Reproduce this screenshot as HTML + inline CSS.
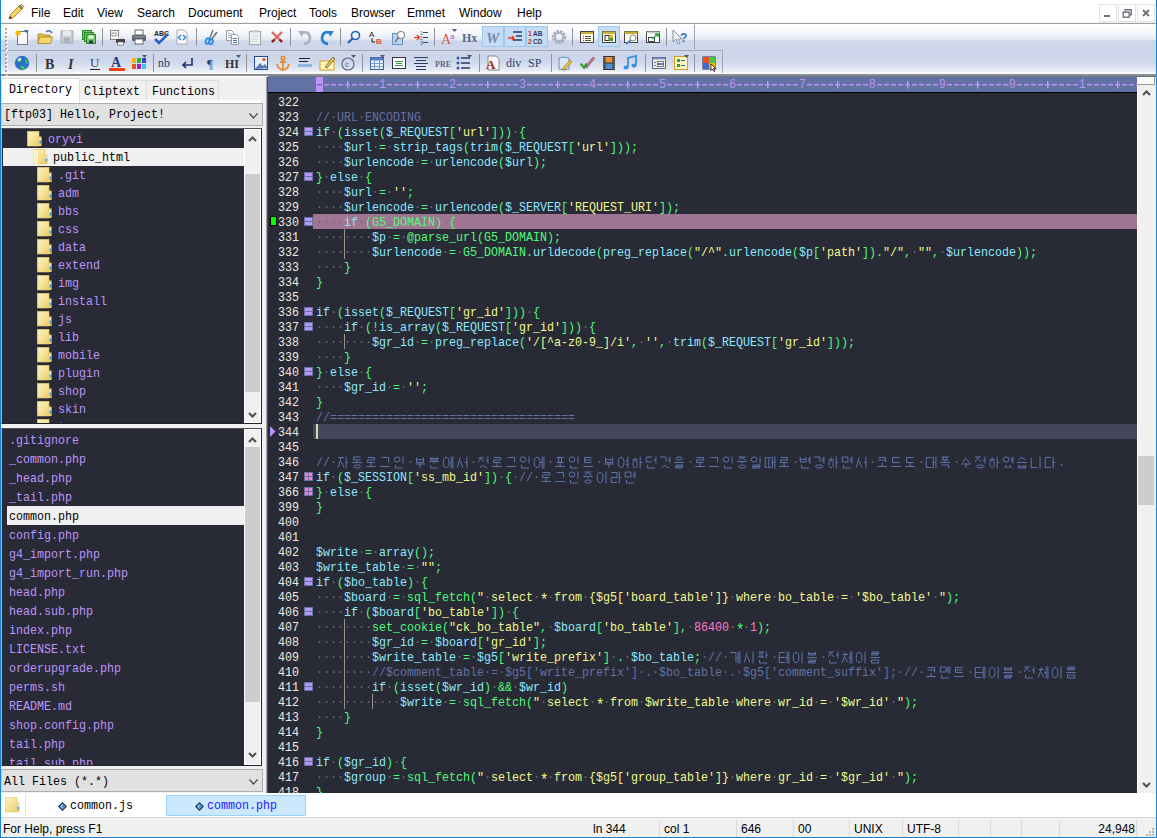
<!DOCTYPE html><html><head><meta charset="utf-8"><title>EditPlus</title><style>
*{margin:0;padding:0;box-sizing:border-box}
html,body{width:1157px;height:838px;overflow:hidden;background:#fff}
body{position:relative;font-family:"Liberation Sans",sans-serif}
.a{position:absolute}
.menu{position:absolute;top:5px;font-size:12px;line-height:16px;color:#000;white-space:pre}
.ic{position:absolute;overflow:visible}
.sep{position:absolute;width:1px;background:#8e949c}
.hlb{position:absolute;background:#c4dcf6;border:1px solid #99c8f0}
.grip{position:absolute;left:5px;width:2px;height:2px;background:#a4aab4;box-shadow:1px 1px 0 #fff}
.mono{font-family:"Liberation Mono",monospace}
.ln{position:absolute;left:268px;width:32px;text-align:right;height:15px;font-family:"Liberation Mono",monospace;font-size:13.333px;line-height:15px;color:#eeeae0;white-space:pre;padding-right:1px}
.ln span{display:inline-block;transform:scaleX(.875);transform-origin:100% 0}
.tx{position:absolute;left:316px;height:15px;font-family:"Liberation Mono",monospace;font-size:13.333px;line-height:15px;white-space:pre;transform:scaleX(.875);transform-origin:0 0}
.tx i{font-style:normal}
.tx svg.hg{display:inline-block;vertical-align:top;width:16px;height:15px}
.w{color:#6e6e6e}
.kw{color:#8be9fd}
.op{color:#50fa7b}
.st{color:#f1fa8c}
.nu{color:#ff79c6}
.cm{color:#6272a4}
.fold{position:absolute;left:304px;width:9px;height:9px;background:#6272a4}
.fold:before{content:"";position:absolute;left:1px;top:1px;width:7px;height:3px;background:#bd93f9}
.fold:after{content:"";position:absolute;left:1px;top:5px;width:7px;height:3px;background:#bd93f9}
.foldc{position:absolute;left:304px;width:9px;height:9px;background:#6272a4}
.foldc i{position:absolute;width:3px;height:3px;background:#ff79c6}
.guide{position:absolute;width:1px;background:#9a9488}
.tree{position:absolute;font-family:"Liberation Mono",monospace;font-size:13.333px;line-height:18px;white-space:pre;color:#bd93f9}
.tree span,.fl span{display:inline-block;transform:scaleX(.875);transform-origin:0 0}
.fl{position:absolute;left:9px;font-family:"Liberation Mono",monospace;font-size:13.333px;line-height:19px;white-space:pre;color:#bd93f9}
.folder{position:absolute;width:14px;height:15px}
.sb{position:absolute;background:#f0f0f0}
.stat{position:absolute;top:821px;font-size:12px;line-height:16px;color:#000;white-space:pre}
.ssep{position:absolute;top:820px;width:1px;height:17px;background:#d9d9d9}
</style></head><body>
<svg width="0" height="0" style="position:absolute"><defs><linearGradient id="fg" x1="0" y1="0" x2="1" y2="1"><stop offset="0" stop-color="#fcf3c4"/><stop offset=".6" stop-color="#f4e090"/><stop offset="1" stop-color="#e8c868"/></linearGradient></defs></svg>
<div class="a" style="left:0;top:0;width:1157px;height:23px;background:#fff"></div>
<svg class="ic" style="left:7px;top:3px" width="18" height="18" viewBox="0 0 18 18"><path d="M2 16l1.5-4.5L13 2l3 3-9.5 9.5z" fill="#f8d060" stroke="#a07020" stroke-width=".8"/><path d="M12 3l3 3" stroke="#3a8a3a" stroke-width="1.4"/><path d="M13.5 1.5l3 3 .8-.8-3-3z" fill="#e06070"/><path d="M2 16l1-3 2 2z" fill="#333"/></svg>
<div class="menu" style="left:31px">File</div>
<div class="menu" style="left:63px">Edit</div>
<div class="menu" style="left:97px">View</div>
<div class="menu" style="left:137px">Search</div>
<div class="menu" style="left:188px">Document</div>
<div class="menu" style="left:259px">Project</div>
<div class="menu" style="left:309px">Tools</div>
<div class="menu" style="left:351px">Browser</div>
<div class="menu" style="left:407px">Emmet</div>
<div class="menu" style="left:459px">Window</div>
<div class="menu" style="left:517px">Help</div>
<div class="a" style="left:1099px;top:4px;width:18px;height:18px;border:1px solid #e3e3e3;background:#fff"></div>
<div class="a" style="left:1118px;top:4px;width:18px;height:18px;border:1px solid #e3e3e3;background:#fff"></div>
<div class="a" style="left:1137px;top:4px;width:18px;height:18px;border:1px solid #e3e3e3;background:#fff"></div>
<div class="a" style="left:1104px;top:15px;width:6px;height:2px;background:#6b707a"></div>
<svg class="ic" style="left:1121px;top:7px" width="12" height="12" viewBox="0 0 12 12"><rect x="2.2" y="5.2" width="6" height="5" fill="none" stroke="#6b707a" stroke-width="1.4"/><path d="M4.2 4.5V2.7h6v5h-1.6" fill="none" stroke="#6b707a" stroke-width="1.4"/></svg>
<svg class="ic" style="left:1142px;top:9px" width="8" height="8" viewBox="0 0 8 8"><path d="M1 1l6 6M7 1L1 7" stroke="#6b707a" stroke-width="1.8"/></svg>
<div class="a" style="left:0;top:22px;width:1157px;height:1px;background:#f0f0f0"></div>
<div class="a" style="left:0;top:23px;width:1157px;height:1px;background:#a0a0a0"></div>
<div class="a" style="left:0;top:24px;width:1157px;height:50px;background:linear-gradient(to bottom,#ffffff 0px,#f5f7fb 9px,#e6ebf4 15px,#dde3ef 16px,#cdd6ea 17px,#cdd6ea 37px,#dfe5f1 44px,#eef1f8 48px,#fbfcfe 49px)"></div>
<div class="a" style="left:1px;top:50px;width:722px;height:1px;background:#a4a8ae"></div>
<div class="a" style="left:722px;top:50px;width:1px;height:24px;background:#a4a8ae"></div>
<div class="a" style="left:694px;top:25px;width:1px;height:24px;background:#a4a8ae"></div>
<div class="a" style="left:0;top:73px;width:1157px;height:1px;background:#fafbfd"></div>
<div class="a" style="left:0;top:74px;width:1157px;height:2px;background:#8a8d92"></div>
<div class="a" style="left:0;top:76px;width:1157px;height:1px;background:#fff"></div>
<div class="a" style="left:268px;top:76px;width:889px;height:1px;background:#70747c"></div>
<div class="grip" style="top:28px"></div>
<div class="grip" style="top:32px"></div>
<div class="grip" style="top:36px"></div>
<div class="grip" style="top:40px"></div>
<div class="grip" style="top:44px"></div>
<div class="grip" style="top:48px"></div>
<div class="grip" style="top:54px"></div>
<div class="grip" style="top:58px"></div>
<div class="grip" style="top:62px"></div>
<div class="grip" style="top:66px"></div>
<div class="grip" style="top:70px"></div>
<div class="grip" style="top:74px"></div>
<div class="hlb" style="left:482px;top:26px;width:22px;height:21px"></div>
<div class="hlb" style="left:504px;top:26px;width:22px;height:21px"></div>
<div class="hlb" style="left:526px;top:26px;width:22px;height:21px"></div>
<div class="hlb" style="left:598px;top:26px;width:22px;height:21px"></div>
<svg class="ic" style="left:14px;top:29px" width="16" height="16" viewBox="0 0 16 16"><rect x="3.5" y="2.5" width="10" height="13" fill="#fafafa" stroke="#777"/><circle cx="4" cy="4" r="2.6" fill="#ffb800"/><path d="M10 1h5l-2.5 3z" fill="#4a6da0"/></svg>
<svg class="ic" style="left:37px;top:29px" width="16" height="16" viewBox="0 0 16 16"><path d="M1 5h5l1 1h6v8H1z" fill="#e8c050" stroke="#a88020" stroke-width=".8"/><path d="M2.5 8h13l-2 6.5H1z" fill="#f6d870" stroke="#a88020" stroke-width=".8"/><path d="M9 3q3-3 6 1" fill="none" stroke="#3a6cb0" stroke-width="1.5"/></svg>
<svg class="ic" style="left:59px;top:29px" width="16" height="16" viewBox="0 0 16 16"><rect x="2" y="2" width="12" height="12" fill="#c8ccd2" stroke="#a8acb2"/><rect x="4" y="2" width="8" height="5" fill="#e8eaee"/><rect x="5" y="9" width="6" height="5" fill="#b0b4ba"/></svg>
<svg class="ic" style="left:81px;top:29px" width="16" height="16" viewBox="0 0 16 16"><g fill="#6cc86c" stroke="#2a8a2a"><rect x="1.5" y="1.5" width="9" height="9"/><rect x="3.5" y="3.5" width="9" height="9"/><rect x="5.5" y="5.5" width="9" height="9"/></g><rect x="7.5" y="6.5" width="5" height="3" fill="#f0fff0"/><rect x="8" y="11.5" width="4" height="3" fill="#334"/></svg>
<div class="sep" style="left:102px;top:28px;height:18px"></div>
<svg class="ic" style="left:109px;top:29px" width="16" height="16" viewBox="0 0 16 16"><rect x="1.5" y="1.5" width="8" height="9" fill="#f8f8f8" stroke="#888"/><rect x="3" y="4" width="4" height="3" fill="none" stroke="#888" stroke-width=".8"/><rect x="7" y="10" width="9" height="4" fill="#444"/><rect x="9" y="8" width="5" height="2" fill="#ddd"/><rect x="8.5" y="13" width="6" height="3" fill="#fff" stroke="#555" stroke-width=".6"/></svg>
<svg class="ic" style="left:131px;top:29px" width="16" height="16" viewBox="0 0 16 16"><rect x="4" y="1" width="8" height="5" fill="#fff" stroke="#666"/><rect x="1" y="6" width="14" height="6" rx="1" fill="#58606a"/><rect x="4" y="10" width="8" height="5" fill="#fff" stroke="#666"/><rect x="2" y="7" width="12" height="1.5" fill="#8890a0"/></svg>
<svg class="ic" style="left:153px;top:29px" width="16" height="16" viewBox="0 0 16 16"><text x="1" y="7" font-family="Liberation Sans" font-size="7" font-weight="bold" fill="#222">ABC</text><path d="M2 10l4 4 9-9" fill="none" stroke="#2a5cc8" stroke-width="2.5"/></svg>
<svg class="ic" style="left:174px;top:29px" width="16" height="16" viewBox="0 0 16 16"><path d="M3 1h7l3 3v11H3z" fill="#fafafa" stroke="#aaa"/><path d="M7 6l-2.5 2.5L7 11M9 6l2.5 2.5L9 11" fill="none" stroke="#3a90e0" stroke-width="1.6"/></svg>
<div class="sep" style="left:196px;top:28px;height:18px"></div>
<svg class="ic" style="left:203px;top:29px" width="16" height="16" viewBox="0 0 16 16"><path d="M6.5 10L10 1M8.5 10.5L14 3" stroke="#606870" stroke-width="1.3"/><ellipse cx="4.5" cy="12" rx="1.8" ry="2.8" fill="none" stroke="#2a88e8" stroke-width="1.8" transform="rotate(20 4.5 12)"/><ellipse cx="8" cy="12.8" rx="1.8" ry="2.6" fill="none" stroke="#2a88e8" stroke-width="1.8" transform="rotate(20 8 12.8)"/></svg>
<svg class="ic" style="left:225px;top:29px" width="16" height="16" viewBox="0 0 16 16"><path d="M1.5 1.5h5l2 2v8h-7z" fill="#fafafa" stroke="#9a9a9a"/><path d="M6.5 5.5h5l2 2v8h-7z" fill="#fff" stroke="#9a9a9a"/><path d="M3 4.5h3M3 6.5h3M3 8.5h3" stroke="#9ab8d8"/><path d="M8 9.5h4M8 11.5h4M8 13.5h4" stroke="#3a78c0"/></svg>
<svg class="ic" style="left:247px;top:29px" width="16" height="16" viewBox="0 0 16 16"><rect x="2.5" y="2.5" width="11" height="13" fill="#f4f4f0" stroke="#a8a8a8" stroke-width="1.2"/><rect x="5.5" y="1" width="5" height="2.5" fill="#c8c8c8"/><path d="M4.5 6.5h7M4.5 8.5h7M4.5 10.5h7M4.5 12.5h7" stroke="#d0dae6"/></svg>
<svg class="ic" style="left:269px;top:29px" width="16" height="16" viewBox="0 0 16 16"><path d="M3 3l10 10M13 3L3 13" stroke="#e06a6a" stroke-width="2.4"/><path d="M5.5 10.5L3 13M10.5 10.5L13 13" stroke="#902020" stroke-width="2.4"/></svg>
<div class="sep" style="left:290px;top:28px;height:18px"></div>
<svg class="ic" style="left:297px;top:29px" width="16" height="16" viewBox="0 0 16 16"><path d="M4 4q8-3 9 5q0 5-6 6" fill="none" stroke="#a8b4c4" stroke-width="2.6"/><path d="M1 2l6 0-2 6z" fill="#a8b4c4"/></svg>
<svg class="ic" style="left:319px;top:29px" width="16" height="16" viewBox="0 0 16 16"><path d="M12 4q-8-3-9 5q0 5 6 6" fill="none" stroke="#2a80d8" stroke-width="2.8"/><path d="M15 2l-6 0 2 6z" fill="#2a80d8"/></svg>
<div class="sep" style="left:340px;top:28px;height:18px"></div>
<svg class="ic" style="left:346px;top:29px" width="16" height="16" viewBox="0 0 16 16"><circle cx="9.5" cy="6.5" r="4" fill="#e8f4ff" stroke="#2a60b8" stroke-width="1.6"/><path d="M7 9l-5 5" stroke="#2a60b8" stroke-width="2.2"/></svg>
<svg class="ic" style="left:369px;top:29px" width="16" height="16" viewBox="0 0 16 16"><text x="0" y="8" font-family="Liberation Sans" font-size="8" fill="#222">A</text><text x="7" y="15" font-family="Liberation Sans" font-size="8" font-weight="bold" fill="#f05020">B</text><path d="M3 9v4h3" fill="none" stroke="#222"/></svg>
<svg class="ic" style="left:391px;top:29px" width="16" height="16" viewBox="0 0 16 16"><rect x="1.5" y="4.5" width="10" height="11" fill="#b8d4f0" stroke="#6a90c0"/><circle cx="10" cy="6" r="3.5" fill="#fff" stroke="#888" stroke-width="1.2"/><path d="M8 8l-4 5" stroke="#777" stroke-width="1.6"/></svg>
<svg class="ic" style="left:413px;top:29px" width="16" height="16" viewBox="0 0 16 16"><path d="M1 8.5h5" stroke="#f04010" stroke-width="1.3"/><path d="M4 6l2.5 2.5L4 11" fill="none" stroke="#f04010" stroke-width="1.3"/><text x="7" y="6" font-family="Liberation Sans" font-size="5" fill="#2a5cb0">1</text><text x="7" y="11" font-family="Liberation Sans" font-size="5" fill="#2a5cb0">2</text><text x="7" y="16" font-family="Liberation Sans" font-size="5" fill="#2a5cb0">3</text><path d="M10 3.5h5M10 8.5h5M10 13.5h5" stroke="#444"/></svg>
<div class="sep" style="left:434px;top:28px;height:18px"></div>
<svg class="ic" style="left:441px;top:29px" width="16" height="16" viewBox="0 0 16 16"><text x="0" y="15" font-family="Liberation Serif" font-size="14" fill="#d06050">A</text><text x="9" y="10" font-family="Liberation Sans" font-size="8" fill="#a060c0">a</text><path d="M11 0h5l-2.5 3z" fill="#4a5a70"/></svg>
<svg class="ic" style="left:462px;top:29px" width="16" height="16" viewBox="0 0 16 16"><text x="0" y="13" font-family="Liberation Serif" font-size="12" font-weight="bold" fill="#5a6a80">Hx</text></svg>
<svg class="ic" style="left:485px;top:29px" width="16" height="16" viewBox="0 0 16 16"><text x="1" y="14" font-family="Liberation Serif" font-size="15" font-style="italic" font-weight="bold" fill="#7a8aa0">W</text></svg>
<svg class="ic" style="left:507px;top:29px" width="16" height="16" viewBox="0 0 16 16"><path d="M6 3h9M9 7h6M6 11h9" stroke="#2a3a60" stroke-width="1.6"/><path d="M1 9h6M5 7l2 2-2 2" stroke="#f04010" stroke-width="1.4" fill="none"/></svg>
<svg class="ic" style="left:528px;top:29px" width="16" height="16" viewBox="0 0 16 16"><text x="0" y="7" font-family="Liberation Sans" font-size="7" font-weight="bold" fill="#e03010">1</text><text x="0" y="15" font-family="Liberation Sans" font-size="7" font-weight="bold" fill="#e03010">2</text><text x="5" y="7" font-family="Liberation Sans" font-size="6.5" font-weight="bold" fill="#2a3a60">AB</text><text x="5" y="15" font-family="Liberation Sans" font-size="6.5" font-weight="bold" fill="#2a3a60">CD</text></svg>
<svg class="ic" style="left:551px;top:29px" width="16" height="16" viewBox="0 0 16 16"><circle cx="8" cy="8" r="5.5" fill="none" stroke="#a0a8b4" stroke-width="3" stroke-dasharray="2.2 1.1"/><circle cx="8" cy="8" r="4" fill="none" stroke="#a8b0bc" stroke-width="1.6"/></svg>
<div class="sep" style="left:572px;top:28px;height:18px"></div>
<svg class="ic" style="left:579px;top:29px" width="16" height="16" viewBox="0 0 16 16"><rect x="1.5" y="2.5" width="13" height="11" fill="#fffbe8" stroke="#444"/><rect x="2" y="3" width="12" height="2" fill="#c8b040"/><path d="M4 7.5h1M4 9.5h1M4 11.5h1" stroke="#d03030"/><path d="M6 7.5h6M6 9.5h6M6 11.5h6" stroke="#555"/></svg>
<svg class="ic" style="left:601px;top:29px" width="16" height="16" viewBox="0 0 16 16"><rect x="1.5" y="2.5" width="13" height="11" fill="#fffbe8" stroke="#444"/><rect x="1.5" y="2.5" width="13" height="2.5" fill="#c8b040"/><rect x="4" y="6.5" width="4" height="5" fill="none" stroke="#333"/><rect x="9" y="6" width="3" height="3" fill="#e0c020"/><rect x="9" y="9" width="3" height="3" fill="#30a030"/></svg>
<svg class="ic" style="left:623px;top:29px" width="16" height="16" viewBox="0 0 16 16"><rect x="1.5" y="2.5" width="13" height="11" fill="#fffbe8" stroke="#444"/><rect x="1.5" y="2.5" width="13" height="2.5" fill="#c8b040"/><circle cx="10" cy="9" r="3" fill="#fff" stroke="#888"/><path d="M8 11l-5 4" stroke="#4a80c8" stroke-width="1.8"/></svg>
<svg class="ic" style="left:645px;top:29px" width="16" height="16" viewBox="0 0 16 16"><rect x="1.5" y="2.5" width="13" height="11" fill="#fff" stroke="#444"/><rect x="1.5" y="2.5" width="13" height="2" fill="#ccc"/><rect x="3.5" y="8.5" width="6" height="4" fill="none" stroke="#444"/><path d="M7 10l6-5M10 5h3v3" stroke="#20b040" stroke-width="1.6" fill="none"/></svg>
<div class="sep" style="left:666px;top:28px;height:18px"></div>
<svg class="ic" style="left:672px;top:29px" width="16" height="16" viewBox="0 0 16 16"><path d="M1 1v12l3-3 2 5 2-1-2-4h4z" fill="#f8f8f8" stroke="#8090a0"/><text x="8" y="13" font-family="Liberation Sans" font-size="12" font-weight="bold" fill="#3a70c8">?</text></svg>
<svg class="ic" style="left:14px;top:55px" width="16" height="16" viewBox="0 0 16 16"><circle cx="8" cy="8" r="7.2" fill="#2a70d0"/><path d="M3 5q2-3 5-2l-1 3-3 1zM6 11q3-1 5 2l-3 2zM11 4l2 1 1 4-2-1z" fill="#40d040"/><circle cx="5.5" cy="4.5" r="1.5" fill="#f0f8ff"/></svg>
<div class="sep" style="left:36px;top:54px;height:18px"></div>
<svg class="ic" style="left:43px;top:55px" width="16" height="16" viewBox="0 0 16 16"><text x="2" y="13.5" font-family="Liberation Serif" font-size="14" font-weight="bold" fill="#333">B</text></svg>
<svg class="ic" style="left:65px;top:55px" width="16" height="16" viewBox="0 0 16 16"><text x="3" y="13.5" font-family="Liberation Serif" font-size="14" font-style="italic" font-weight="bold" fill="#333">I</text></svg>
<svg class="ic" style="left:87px;top:55px" width="16" height="16" viewBox="0 0 16 16"><text x="3" y="12" font-family="Liberation Serif" font-size="13" fill="#444">U</text><path d="M3 14.5h10" stroke="#222"/></svg>
<svg class="ic" style="left:109px;top:55px" width="16" height="16" viewBox="0 0 16 16"><text x="2" y="12" font-family="Liberation Serif" font-size="14" font-weight="bold" fill="#1a3a80">A</text><rect x="0" y="13" width="16" height="3" fill="#f04010"/></svg>
<svg class="ic" style="left:131px;top:55px" width="16" height="16" viewBox="0 0 16 16"><rect x="1" y="3" width="4" height="5" fill="#f8b800"/><rect x="6" y="3" width="4" height="5" fill="#30b030"/><rect x="11" y="3" width="4" height="5" fill="#4040d0"/><rect x="1" y="9" width="4" height="5" fill="#f05020"/><rect x="6" y="9" width="4" height="5" fill="#a020c0"/><rect x="11" y="9" width="4" height="5" fill="#40c0f0"/><path d="M11 0h5l-2.5 3z" fill="#4a5a70"/></svg>
<div class="sep" style="left:153px;top:54px;height:18px"></div>
<svg class="ic" style="left:158px;top:55px" width="16" height="16" viewBox="0 0 16 16"><text x="0" y="12" font-family="Liberation Serif" font-size="12" fill="#2a4070">nb</text></svg>
<svg class="ic" style="left:180px;top:55px" width="16" height="16" viewBox="0 0 16 16"><path d="M12 3v7H4M6 7l-3 3 3 3" fill="none" stroke="#1a3070" stroke-width="1.6"/></svg>
<svg class="ic" style="left:203px;top:55px" width="16" height="16" viewBox="0 0 16 16"><text x="4" y="13" font-family="Liberation Serif" font-size="13" fill="#2a4070">¶</text></svg>
<svg class="ic" style="left:225px;top:55px" width="16" height="16" viewBox="0 0 16 16"><text x="0" y="13" font-family="Liberation Serif" font-size="12" font-weight="bold" fill="#333">HI</text><path d="M11 0h5l-2.5 3z" fill="#4a5a70"/></svg>
<div class="sep" style="left:246px;top:54px;height:18px"></div>
<svg class="ic" style="left:253px;top:55px" width="16" height="16" viewBox="0 0 16 16"><rect x="1.5" y="1.5" width="13" height="13" fill="#e8f0ff" stroke="#2a4a90"/><path d="M2 14l5-6 3 3 2-2 3 4z" fill="#5a7ab0"/><circle cx="11" cy="4.5" r="1.6" fill="#f04010"/></svg>
<svg class="ic" style="left:275px;top:55px" width="16" height="16" viewBox="0 0 16 16"><circle cx="8" cy="3" r="1.8" fill="none" stroke="#e09030" stroke-width="1.6"/><path d="M8 5v10M5 7h6M2 9q1 5 6 6q5-1 6-6" fill="none" stroke="#e09030" stroke-width="1.8"/></svg>
<svg class="ic" style="left:297px;top:55px" width="16" height="16" viewBox="0 0 16 16"><path d="M2 3.5h11M2 6.5h9" stroke="#222" stroke-width="1"/><rect x="1" y="9" width="14" height="3" fill="#8cb8e8"/></svg>
<svg class="ic" style="left:319px;top:55px" width="16" height="16" viewBox="0 0 16 16"><rect x="1" y="6" width="14" height="9" fill="#fff8c0" stroke="#d0a020"/><path d="M6 12l8-10 2 2-8 9z" fill="#f8c040" stroke="#333" stroke-width=".6"/></svg>
<svg class="ic" style="left:340px;top:55px" width="16" height="16" viewBox="0 0 16 16"><circle cx="8" cy="9" r="6" fill="none" stroke="#5a6a80" stroke-width="1.2"/><text x="5" y="12" font-family="Liberation Sans" font-size="8" fill="#5a6a80">c</text><path d="M11 0h5l-2.5 3z" fill="#4a5a70"/></svg>
<div class="sep" style="left:362px;top:54px;height:18px"></div>
<svg class="ic" style="left:369px;top:55px" width="16" height="16" viewBox="0 0 16 16"><rect x="1.5" y="2.5" width="13" height="12" fill="#e8f0ff" stroke="#3a5aa0"/><rect x="1.5" y="2.5" width="13" height="3" fill="#5a80c8"/><path d="M1.5 8.5h13M1.5 11.5h13M5.5 5.5v9M10.5 5.5v9" stroke="#7a9ad0"/><path d="M11 0h5l-2.5 3z" fill="#4a5a70"/></svg>
<svg class="ic" style="left:391px;top:55px" width="16" height="16" viewBox="0 0 16 16"><rect x="1.5" y="2.5" width="13" height="11" fill="#fff" stroke="#334"/><path d="M4 6.5h8M5 8.5h6M4 10.5h8" stroke="#30a030"/></svg>
<svg class="ic" style="left:413px;top:55px" width="16" height="16" viewBox="0 0 16 16"><path d="M1 2.5h14M3 5.5h10M1 8.5h14M3 11.5h10M3 14.5h10" stroke="#2a3a60" stroke-width="1.2"/></svg>
<svg class="ic" style="left:435px;top:55px" width="16" height="16" viewBox="0 0 16 16"><text x="0" y="12" font-family="Liberation Serif" font-size="8" font-weight="bold" fill="#5a6a80">PRE</text></svg>
<svg class="ic" style="left:456px;top:55px" width="16" height="16" viewBox="0 0 16 16"><circle cx="2" cy="3" r="1.5" fill="#2a5cb0"/><circle cx="2" cy="8" r="1.5" fill="#2a5cb0"/><circle cx="2" cy="13" r="1.5" fill="#2a5cb0"/><path d="M5 3h9M5 8h9M5 13h9" stroke="#2a3a60" stroke-width="1.4"/><path d="M11 0h5l-2.5 3z" fill="#4a5a70"/></svg>
<div class="sep" style="left:479px;top:54px;height:18px"></div>
<svg class="ic" style="left:485px;top:55px" width="16" height="16" viewBox="0 0 16 16"><path d="M3 1h8l3 3v11H3z" fill="#fafafa" stroke="#888"/><text x="1" y="14" font-family="Liberation Serif" font-size="13" font-weight="bold" fill="#a02020">A</text></svg>
<svg class="ic" style="left:506px;top:55px" width="16" height="16" viewBox="0 0 16 16"><text x="0" y="12" font-family="Liberation Serif" font-size="12" fill="#2a4070">div</text></svg>
<svg class="ic" style="left:528px;top:55px" width="16" height="16" viewBox="0 0 16 16"><text x="0" y="12" font-family="Liberation Serif" font-size="12" fill="#2a4070">SP</text></svg>
<div class="sep" style="left:551px;top:54px;height:18px"></div>
<svg class="ic" style="left:557px;top:55px" width="16" height="16" viewBox="0 0 16 16"><path d="M2 3q3-2 10 0v11q-5 2-10 0z" fill="#d8e8f8" stroke="#6a8ab0"/><path d="M5 14l8-9 2 2-8 8z" fill="#f0c040" stroke="#8a6a20" stroke-width=".6"/></svg>
<svg class="ic" style="left:579px;top:55px" width="16" height="16" viewBox="0 0 16 16"><path d="M1.5 8.5l3.5 4 3-4" fill="none" stroke="#30a030" stroke-width="2.4"/><path d="M6 12l8-10 1.8 1.2-8 10z" fill="#d07090" stroke="#554" stroke-width=".5"/></svg>
<svg class="ic" style="left:601px;top:55px" width="16" height="16" viewBox="0 0 16 16"><rect x="2" y="1" width="12" height="14" fill="#333"/><rect x="4.5" y="2" width="7" height="5.5" fill="#e89040"/><rect x="4.5" y="8.5" width="7" height="5.5" fill="#4a90d0"/><path d="M3 2v12M13 2v12" stroke="#ddd" stroke-dasharray="1 1.2"/></svg>
<svg class="ic" style="left:622px;top:55px" width="16" height="16" viewBox="0 0 16 16"><path d="M6 12V3l8-2v9" fill="none" stroke="#3a90e0" stroke-width="1.8"/><ellipse cx="4" cy="12.5" rx="2.5" ry="2" fill="#3a90e0"/><ellipse cx="12" cy="10.5" rx="2.5" ry="2" fill="#3a90e0"/></svg>
<div class="sep" style="left:645px;top:54px;height:18px"></div>
<svg class="ic" style="left:651px;top:55px" width="16" height="16" viewBox="0 0 16 16"><rect x="1.5" y="2.5" width="13" height="11" fill="#f8f0c8" stroke="#5a6a9a"/><rect x="2" y="3" width="12" height="1.5" fill="#7a9ad8"/><path d="M3 7.5h2M3 10.5h2" stroke="#5a7ab8"/><rect x="6.5" y="6.5" width="6" height="2" fill="#fff" stroke="#5a7ab8"/><rect x="6.5" y="9.5" width="6" height="2" fill="#fff" stroke="#5a7ab8"/></svg>
<svg class="ic" style="left:673px;top:55px" width="16" height="16" viewBox="0 0 16 16"><rect x="1.5" y="1.5" width="13" height="13" fill="#fff8c0" stroke="#d0a020"/><rect x="4" y="4" width="3" height="3" fill="#30a030"/><rect x="4" y="9" width="3" height="3" fill="#30a030"/><path d="M8 5.5h4M8 10.5h4" stroke="#2a5cb0"/><path d="M11 0h5l-2.5 3z" fill="#4a5a70"/></svg>
<div class="sep" style="left:694px;top:54px;height:18px"></div>
<svg class="ic" style="left:701px;top:55px" width="16" height="16" viewBox="0 0 16 16"><rect x="1.5" y="1.5" width="13" height="13" fill="#222a40"/><rect x="2" y="2" width="6" height="6" fill="#f05020"/><rect x="8" y="2" width="6" height="6" fill="#50c050"/><rect x="2" y="8" width="6" height="6" fill="#3a6cd0"/><rect x="8" y="8" width="6" height="6" fill="#f8b800"/><path d="M10 9v6.5l1.5-1.5 1.5 2.5 1-.6-1.4-2.4h2z" fill="#fff" stroke="#000" stroke-width=".7"/></svg>
<div class="a" style="left:1px;top:77px;width:266px;height:716px;background:#f0f0f0"></div>
<div class="a" style="left:79px;top:80px;width:68px;height:21px;background:#f0f0f0;border:1px solid #dcdcdc;border-bottom:none"></div>
<div class="a" style="left:146px;top:80px;width:73px;height:21px;background:#f0f0f0;border:1px solid #dcdcdc;border-bottom:none"></div>
<div class="a" style="left:79px;top:100px;width:182px;height:3px;background:#fff"></div>
<div class="a" style="left:1px;top:78px;width:79px;height:25px;background:#fff;border:1px solid #dcdcdc;border-bottom:none"></div>
<div class="a mono" style="left:9px;top:82px;font-size:13.333px;line-height:16px;color:#000;white-space:pre;transform:scaleX(.875);transform-origin:0 0">Directory</div>
<div class="a mono" style="left:84px;top:84px;font-size:13.333px;line-height:16px;color:#000;white-space:pre;transform:scaleX(.875);transform-origin:0 0">Cliptext</div>
<div class="a mono" style="left:152px;top:84px;font-size:13.333px;line-height:16px;color:#000;white-space:pre;transform:scaleX(.875);transform-origin:0 0">Functions</div>
<div class="a" style="left:1px;top:103px;width:262px;height:23px;background:#e1e1e1;border:1px solid #adadad;border-left-color:#c8c8c8"></div>
<div class="a mono" style="left:4px;top:107px;font-size:13.333px;line-height:16px;color:#000;white-space:pre;transform:scaleX(.875);transform-origin:0 0">[ftp03] Hello, Project!</div>
<svg class="ic" style="left:249px;top:113px" width="9" height="6" viewBox="0 0 9 6"><path d="M.5 .5L4.5 5L8.5 .5" fill="none" stroke="#444" stroke-width="1.2"/></svg>
<div class="a" style="left:1px;top:128px;width:261px;height:296px;background:#282a36;border:1px solid #22242c;border-left-color:#b0b0b0;border-top-color:#50525a"></div>
<div class="a" style="left:2px;top:129px;width:242px;height:294px;overflow:hidden">
<svg class="ic" style="left:25px;top:2px" width="15" height="16" viewBox="0 0 15 16"><rect x=".3" y=".3" width="11.7" height="14.7" fill="url(#fg)" stroke="#e6c868" stroke-width=".6"/><rect x="12" y="5.5" width="2.6" height="9.5" fill="#efcf6a"/><rect x="12.7" y="7" width="1.2" height="2.5" fill="#e8f4ff"/><rect x="12.7" y="9.5" width="1.2" height="3" fill="#2f8fe0"/></svg>
<div class="tree" style="left:46px;top:2px;color:#bd93f9"><span>oryvi</span></div>
<div class="a" style="left:1px;top:19px;width:241px;height:18px;background:#f0f0f0"></div>
<svg class="ic" style="left:31px;top:20px" width="15" height="16" viewBox="0 0 15 16"><rect x=".3" y=".3" width="11.7" height="14.7" fill="url(#fg)" stroke="#e6c868" stroke-width=".6"/><rect x="12" y="5.5" width="2.6" height="9.5" fill="#efcf6a"/><rect x="12.7" y="7" width="1.2" height="2.5" fill="#e8f4ff"/><rect x="12.7" y="9.5" width="1.2" height="3" fill="#2f8fe0"/><path d="M.5 .5L5 2v13.5L.5 14z" fill="#fdf6d0" opacity=".8"/></svg>
<div class="tree" style="left:51px;top:20px;color:#000"><span>public_html</span></div>
<svg class="ic" style="left:35px;top:38px" width="15" height="16" viewBox="0 0 15 16"><rect x=".3" y=".3" width="11.7" height="14.7" fill="url(#fg)" stroke="#e6c868" stroke-width=".6"/><rect x="12" y="5.5" width="2.6" height="9.5" fill="#efcf6a"/><rect x="12.7" y="7" width="1.2" height="2.5" fill="#e8f4ff"/><rect x="12.7" y="9.5" width="1.2" height="3" fill="#2f8fe0"/></svg>
<div class="tree" style="left:56px;top:38px;color:#bd93f9"><span>.git</span></div>
<svg class="ic" style="left:35px;top:56px" width="15" height="16" viewBox="0 0 15 16"><rect x=".3" y=".3" width="11.7" height="14.7" fill="url(#fg)" stroke="#e6c868" stroke-width=".6"/><rect x="12" y="5.5" width="2.6" height="9.5" fill="#efcf6a"/><rect x="12.7" y="7" width="1.2" height="2.5" fill="#e8f4ff"/><rect x="12.7" y="9.5" width="1.2" height="3" fill="#2f8fe0"/></svg>
<div class="tree" style="left:56px;top:56px;color:#bd93f9"><span>adm</span></div>
<svg class="ic" style="left:35px;top:74px" width="15" height="16" viewBox="0 0 15 16"><rect x=".3" y=".3" width="11.7" height="14.7" fill="url(#fg)" stroke="#e6c868" stroke-width=".6"/><rect x="12" y="5.5" width="2.6" height="9.5" fill="#efcf6a"/><rect x="12.7" y="7" width="1.2" height="2.5" fill="#e8f4ff"/><rect x="12.7" y="9.5" width="1.2" height="3" fill="#2f8fe0"/></svg>
<div class="tree" style="left:56px;top:74px;color:#bd93f9"><span>bbs</span></div>
<svg class="ic" style="left:35px;top:92px" width="15" height="16" viewBox="0 0 15 16"><rect x=".3" y=".3" width="11.7" height="14.7" fill="url(#fg)" stroke="#e6c868" stroke-width=".6"/><rect x="12" y="5.5" width="2.6" height="9.5" fill="#efcf6a"/><rect x="12.7" y="7" width="1.2" height="2.5" fill="#e8f4ff"/><rect x="12.7" y="9.5" width="1.2" height="3" fill="#2f8fe0"/></svg>
<div class="tree" style="left:56px;top:92px;color:#bd93f9"><span>css</span></div>
<svg class="ic" style="left:35px;top:110px" width="15" height="16" viewBox="0 0 15 16"><rect x=".3" y=".3" width="11.7" height="14.7" fill="url(#fg)" stroke="#e6c868" stroke-width=".6"/><rect x="12" y="5.5" width="2.6" height="9.5" fill="#efcf6a"/><rect x="12.7" y="7" width="1.2" height="2.5" fill="#e8f4ff"/><rect x="12.7" y="9.5" width="1.2" height="3" fill="#2f8fe0"/></svg>
<div class="tree" style="left:56px;top:110px;color:#bd93f9"><span>data</span></div>
<svg class="ic" style="left:35px;top:128px" width="15" height="16" viewBox="0 0 15 16"><rect x=".3" y=".3" width="11.7" height="14.7" fill="url(#fg)" stroke="#e6c868" stroke-width=".6"/><rect x="12" y="5.5" width="2.6" height="9.5" fill="#efcf6a"/><rect x="12.7" y="7" width="1.2" height="2.5" fill="#e8f4ff"/><rect x="12.7" y="9.5" width="1.2" height="3" fill="#2f8fe0"/></svg>
<div class="tree" style="left:56px;top:128px;color:#bd93f9"><span>extend</span></div>
<svg class="ic" style="left:35px;top:146px" width="15" height="16" viewBox="0 0 15 16"><rect x=".3" y=".3" width="11.7" height="14.7" fill="url(#fg)" stroke="#e6c868" stroke-width=".6"/><rect x="12" y="5.5" width="2.6" height="9.5" fill="#efcf6a"/><rect x="12.7" y="7" width="1.2" height="2.5" fill="#e8f4ff"/><rect x="12.7" y="9.5" width="1.2" height="3" fill="#2f8fe0"/></svg>
<div class="tree" style="left:56px;top:146px;color:#bd93f9"><span>img</span></div>
<svg class="ic" style="left:35px;top:164px" width="15" height="16" viewBox="0 0 15 16"><rect x=".3" y=".3" width="11.7" height="14.7" fill="url(#fg)" stroke="#e6c868" stroke-width=".6"/><rect x="12" y="5.5" width="2.6" height="9.5" fill="#efcf6a"/><rect x="12.7" y="7" width="1.2" height="2.5" fill="#e8f4ff"/><rect x="12.7" y="9.5" width="1.2" height="3" fill="#2f8fe0"/></svg>
<div class="tree" style="left:56px;top:164px;color:#bd93f9"><span>install</span></div>
<svg class="ic" style="left:35px;top:182px" width="15" height="16" viewBox="0 0 15 16"><rect x=".3" y=".3" width="11.7" height="14.7" fill="url(#fg)" stroke="#e6c868" stroke-width=".6"/><rect x="12" y="5.5" width="2.6" height="9.5" fill="#efcf6a"/><rect x="12.7" y="7" width="1.2" height="2.5" fill="#e8f4ff"/><rect x="12.7" y="9.5" width="1.2" height="3" fill="#2f8fe0"/></svg>
<div class="tree" style="left:56px;top:182px;color:#bd93f9"><span>js</span></div>
<svg class="ic" style="left:35px;top:200px" width="15" height="16" viewBox="0 0 15 16"><rect x=".3" y=".3" width="11.7" height="14.7" fill="url(#fg)" stroke="#e6c868" stroke-width=".6"/><rect x="12" y="5.5" width="2.6" height="9.5" fill="#efcf6a"/><rect x="12.7" y="7" width="1.2" height="2.5" fill="#e8f4ff"/><rect x="12.7" y="9.5" width="1.2" height="3" fill="#2f8fe0"/></svg>
<div class="tree" style="left:56px;top:200px;color:#bd93f9"><span>lib</span></div>
<svg class="ic" style="left:35px;top:218px" width="15" height="16" viewBox="0 0 15 16"><rect x=".3" y=".3" width="11.7" height="14.7" fill="url(#fg)" stroke="#e6c868" stroke-width=".6"/><rect x="12" y="5.5" width="2.6" height="9.5" fill="#efcf6a"/><rect x="12.7" y="7" width="1.2" height="2.5" fill="#e8f4ff"/><rect x="12.7" y="9.5" width="1.2" height="3" fill="#2f8fe0"/></svg>
<div class="tree" style="left:56px;top:218px;color:#bd93f9"><span>mobile</span></div>
<svg class="ic" style="left:35px;top:236px" width="15" height="16" viewBox="0 0 15 16"><rect x=".3" y=".3" width="11.7" height="14.7" fill="url(#fg)" stroke="#e6c868" stroke-width=".6"/><rect x="12" y="5.5" width="2.6" height="9.5" fill="#efcf6a"/><rect x="12.7" y="7" width="1.2" height="2.5" fill="#e8f4ff"/><rect x="12.7" y="9.5" width="1.2" height="3" fill="#2f8fe0"/></svg>
<div class="tree" style="left:56px;top:236px;color:#bd93f9"><span>plugin</span></div>
<svg class="ic" style="left:35px;top:254px" width="15" height="16" viewBox="0 0 15 16"><rect x=".3" y=".3" width="11.7" height="14.7" fill="url(#fg)" stroke="#e6c868" stroke-width=".6"/><rect x="12" y="5.5" width="2.6" height="9.5" fill="#efcf6a"/><rect x="12.7" y="7" width="1.2" height="2.5" fill="#e8f4ff"/><rect x="12.7" y="9.5" width="1.2" height="3" fill="#2f8fe0"/></svg>
<div class="tree" style="left:56px;top:254px;color:#bd93f9"><span>shop</span></div>
<svg class="ic" style="left:35px;top:272px" width="15" height="16" viewBox="0 0 15 16"><rect x=".3" y=".3" width="11.7" height="14.7" fill="url(#fg)" stroke="#e6c868" stroke-width=".6"/><rect x="12" y="5.5" width="2.6" height="9.5" fill="#efcf6a"/><rect x="12.7" y="7" width="1.2" height="2.5" fill="#e8f4ff"/><rect x="12.7" y="9.5" width="1.2" height="3" fill="#2f8fe0"/></svg>
<div class="tree" style="left:56px;top:272px;color:#bd93f9"><span>skin</span></div>
<svg class="ic" style="left:35px;top:290px" width="15" height="16" viewBox="0 0 15 16"><rect x=".3" y=".3" width="11.7" height="14.7" fill="url(#fg)" stroke="#e6c868" stroke-width=".6"/><rect x="12" y="5.5" width="2.6" height="9.5" fill="#efcf6a"/><rect x="12.7" y="7" width="1.2" height="2.5" fill="#e8f4ff"/><rect x="12.7" y="9.5" width="1.2" height="3" fill="#2f8fe0"/></svg>
<div class="tree" style="left:56px;top:290px;color:#bd93f9"><span>tmp</span></div>
</div>
<div class="sb" style="left:244px;top:129px;width:17px;height:294px;border:1px solid #fff"></div>
<div class="a" style="left:245px;top:174px;width:15px;height:218px;background:#cdcdcd"></div>
<svg class="ic" style="left:248px;top:136px" width="9" height="6" viewBox="0 0 9 6"><path d="M1 5L4.5 1.5L8 5" fill="none" stroke="#505050" stroke-width="2.1"/></svg>
<svg class="ic" style="left:248px;top:412px" width="9" height="6" viewBox="0 0 9 6"><path d="M1 1L4.5 4.5L8 1" fill="none" stroke="#505050" stroke-width="2.1"/></svg>
<div class="a" style="left:1px;top:428px;width:261px;height:338px;background:#282a36;border:1px solid #22242c;border-left-color:#b0b0b0;border-top-color:#50525a"></div>
<div class="a" style="left:2px;top:429px;width:242px;height:336px;overflow:hidden">
<div class="fl" style="left:7px;top:2px;color:#bd93f9"><span>.gitignore</span></div>
<div class="fl" style="left:7px;top:21px;color:#bd93f9"><span>_common.php</span></div>
<div class="fl" style="left:7px;top:40px;color:#bd93f9"><span>_head.php</span></div>
<div class="fl" style="left:7px;top:59px;color:#bd93f9"><span>_tail.php</span></div>
<div class="a" style="left:5px;top:77px;width:237px;height:19px;background:#f0f0f0"></div>
<div class="fl" style="left:7px;top:78px;color:#000"><span>common.php</span></div>
<div class="fl" style="left:7px;top:97px;color:#bd93f9"><span>config.php</span></div>
<div class="fl" style="left:7px;top:116px;color:#bd93f9"><span>g4_import.php</span></div>
<div class="fl" style="left:7px;top:135px;color:#bd93f9"><span>g4_import_run.php</span></div>
<div class="fl" style="left:7px;top:154px;color:#bd93f9"><span>head.php</span></div>
<div class="fl" style="left:7px;top:173px;color:#bd93f9"><span>head.sub.php</span></div>
<div class="fl" style="left:7px;top:192px;color:#bd93f9"><span>index.php</span></div>
<div class="fl" style="left:7px;top:211px;color:#bd93f9"><span>LICENSE.txt</span></div>
<div class="fl" style="left:7px;top:230px;color:#bd93f9"><span>orderupgrade.php</span></div>
<div class="fl" style="left:7px;top:249px;color:#bd93f9"><span>perms.sh</span></div>
<div class="fl" style="left:7px;top:268px;color:#bd93f9"><span>README.md</span></div>
<div class="fl" style="left:7px;top:287px;color:#bd93f9"><span>shop.config.php</span></div>
<div class="fl" style="left:7px;top:306px;color:#bd93f9"><span>tail.php</span></div>
<div class="fl" style="left:7px;top:325px;color:#bd93f9"><span>tail.sub.php</span></div>
</div>
<div class="sb" style="left:244px;top:429px;width:17px;height:336px;border:1px solid #fff"></div>
<div class="a" style="left:245px;top:447px;width:15px;height:255px;background:#cdcdcd"></div>
<svg class="ic" style="left:248px;top:437px" width="9" height="6" viewBox="0 0 9 6"><path d="M1 5L4.5 1.5L8 5" fill="none" stroke="#505050" stroke-width="2.1"/></svg>
<svg class="ic" style="left:248px;top:752px" width="9" height="6" viewBox="0 0 9 6"><path d="M1 1L4.5 4.5L8 1" fill="none" stroke="#505050" stroke-width="2.1"/></svg>
<div class="a" style="left:1px;top:769px;width:262px;height:23px;background:#e1e1e1;border:1px solid #adadad;border-left-color:#c8c8c8"></div>
<div class="a mono" style="left:4px;top:774px;font-size:13.333px;line-height:16px;color:#000;white-space:pre;transform:scaleX(.875);transform-origin:0 0">All Files (*.*)</div>
<svg class="ic" style="left:249px;top:779px" width="9" height="6" viewBox="0 0 9 6"><path d="M.5 .5L4.5 5L8.5 .5" fill="none" stroke="#444" stroke-width="1.2"/></svg>
<div class="a" style="left:266px;top:77px;width:1px;height:716px;background:#a0a0a0"></div>
<div class="a" style="left:267px;top:77px;width:1px;height:716px;background:#505050"></div>
<div class="a" style="left:268px;top:77px;width:869px;height:716px;background:#282a36"></div>
<div class="a" style="left:268px;top:77px;width:869px;height:15px;background:#6272a4"></div>
<div class="a" style="left:268px;top:92px;width:869px;height:1px;background:#000"></div>
<div class="a" style="left:316px;top:77px;width:7px;height:15px;background:#bd93f9"></div>
<svg class="ic" style="left:268px;top:77px" width="869" height="15" viewBox="0 0 869 15"><rect x="49" y="7" width="5" height="1.4" fill="#6272a4"/><rect x="56" y="7" width="5" height="1.4" fill="#c493fb"/><rect x="63" y="7" width="5" height="1.4" fill="#c493fb"/><rect x="70" y="7" width="5" height="1.4" fill="#c493fb"/><rect x="77" y="7" width="5" height="1.4" fill="#c493fb"/><rect x="79" y="4" width="1.4" height="7.5" fill="#c493fb"/><rect x="84" y="7" width="5" height="1.4" fill="#c493fb"/><rect x="91" y="7" width="5" height="1.4" fill="#c493fb"/><rect x="98" y="7" width="5" height="1.4" fill="#c493fb"/><rect x="105" y="7" width="5" height="1.4" fill="#c493fb"/><rect x="119" y="7" width="5" height="1.4" fill="#c493fb"/><rect x="126" y="7" width="5" height="1.4" fill="#c493fb"/><rect x="133" y="7" width="5" height="1.4" fill="#c493fb"/><rect x="140" y="7" width="5" height="1.4" fill="#c493fb"/><rect x="147" y="7" width="5" height="1.4" fill="#c493fb"/><rect x="149" y="4" width="1.4" height="7.5" fill="#c493fb"/><rect x="154" y="7" width="5" height="1.4" fill="#c493fb"/><rect x="161" y="7" width="5" height="1.4" fill="#c493fb"/><rect x="168" y="7" width="5" height="1.4" fill="#c493fb"/><rect x="175" y="7" width="5" height="1.4" fill="#c493fb"/><rect x="189" y="7" width="5" height="1.4" fill="#c493fb"/><rect x="196" y="7" width="5" height="1.4" fill="#c493fb"/><rect x="203" y="7" width="5" height="1.4" fill="#c493fb"/><rect x="210" y="7" width="5" height="1.4" fill="#c493fb"/><rect x="217" y="7" width="5" height="1.4" fill="#c493fb"/><rect x="219" y="4" width="1.4" height="7.5" fill="#c493fb"/><rect x="224" y="7" width="5" height="1.4" fill="#c493fb"/><rect x="231" y="7" width="5" height="1.4" fill="#c493fb"/><rect x="238" y="7" width="5" height="1.4" fill="#c493fb"/><rect x="245" y="7" width="5" height="1.4" fill="#c493fb"/><rect x="259" y="7" width="5" height="1.4" fill="#c493fb"/><rect x="266" y="7" width="5" height="1.4" fill="#c493fb"/><rect x="273" y="7" width="5" height="1.4" fill="#c493fb"/><rect x="280" y="7" width="5" height="1.4" fill="#c493fb"/><rect x="287" y="7" width="5" height="1.4" fill="#c493fb"/><rect x="289" y="4" width="1.4" height="7.5" fill="#c493fb"/><rect x="294" y="7" width="5" height="1.4" fill="#c493fb"/><rect x="301" y="7" width="5" height="1.4" fill="#c493fb"/><rect x="308" y="7" width="5" height="1.4" fill="#c493fb"/><rect x="315" y="7" width="5" height="1.4" fill="#c493fb"/><rect x="329" y="7" width="5" height="1.4" fill="#c493fb"/><rect x="336" y="7" width="5" height="1.4" fill="#c493fb"/><rect x="343" y="7" width="5" height="1.4" fill="#c493fb"/><rect x="350" y="7" width="5" height="1.4" fill="#c493fb"/><rect x="357" y="7" width="5" height="1.4" fill="#c493fb"/><rect x="359" y="4" width="1.4" height="7.5" fill="#c493fb"/><rect x="364" y="7" width="5" height="1.4" fill="#c493fb"/><rect x="371" y="7" width="5" height="1.4" fill="#c493fb"/><rect x="378" y="7" width="5" height="1.4" fill="#c493fb"/><rect x="385" y="7" width="5" height="1.4" fill="#c493fb"/><rect x="399" y="7" width="5" height="1.4" fill="#c493fb"/><rect x="406" y="7" width="5" height="1.4" fill="#c493fb"/><rect x="413" y="7" width="5" height="1.4" fill="#c493fb"/><rect x="420" y="7" width="5" height="1.4" fill="#c493fb"/><rect x="427" y="7" width="5" height="1.4" fill="#c493fb"/><rect x="429" y="4" width="1.4" height="7.5" fill="#c493fb"/><rect x="434" y="7" width="5" height="1.4" fill="#c493fb"/><rect x="441" y="7" width="5" height="1.4" fill="#c493fb"/><rect x="448" y="7" width="5" height="1.4" fill="#c493fb"/><rect x="455" y="7" width="5" height="1.4" fill="#c493fb"/><rect x="469" y="7" width="5" height="1.4" fill="#c493fb"/><rect x="476" y="7" width="5" height="1.4" fill="#c493fb"/><rect x="483" y="7" width="5" height="1.4" fill="#c493fb"/><rect x="490" y="7" width="5" height="1.4" fill="#c493fb"/><rect x="497" y="7" width="5" height="1.4" fill="#c493fb"/><rect x="499" y="4" width="1.4" height="7.5" fill="#c493fb"/><rect x="504" y="7" width="5" height="1.4" fill="#c493fb"/><rect x="511" y="7" width="5" height="1.4" fill="#c493fb"/><rect x="518" y="7" width="5" height="1.4" fill="#c493fb"/><rect x="525" y="7" width="5" height="1.4" fill="#c493fb"/><rect x="539" y="7" width="5" height="1.4" fill="#c493fb"/><rect x="546" y="7" width="5" height="1.4" fill="#c493fb"/><rect x="553" y="7" width="5" height="1.4" fill="#c493fb"/><rect x="560" y="7" width="5" height="1.4" fill="#c493fb"/><rect x="567" y="7" width="5" height="1.4" fill="#c493fb"/><rect x="569" y="4" width="1.4" height="7.5" fill="#c493fb"/><rect x="574" y="7" width="5" height="1.4" fill="#c493fb"/><rect x="581" y="7" width="5" height="1.4" fill="#c493fb"/><rect x="588" y="7" width="5" height="1.4" fill="#c493fb"/><rect x="595" y="7" width="5" height="1.4" fill="#c493fb"/><rect x="609" y="7" width="5" height="1.4" fill="#c493fb"/><rect x="616" y="7" width="5" height="1.4" fill="#c493fb"/><rect x="623" y="7" width="5" height="1.4" fill="#c493fb"/><rect x="630" y="7" width="5" height="1.4" fill="#c493fb"/><rect x="637" y="7" width="5" height="1.4" fill="#c493fb"/><rect x="639" y="4" width="1.4" height="7.5" fill="#c493fb"/><rect x="644" y="7" width="5" height="1.4" fill="#c493fb"/><rect x="651" y="7" width="5" height="1.4" fill="#c493fb"/><rect x="658" y="7" width="5" height="1.4" fill="#c493fb"/><rect x="665" y="7" width="5" height="1.4" fill="#c493fb"/><rect x="679" y="7" width="5" height="1.4" fill="#c493fb"/><rect x="686" y="7" width="5" height="1.4" fill="#c493fb"/><rect x="693" y="7" width="5" height="1.4" fill="#c493fb"/><rect x="700" y="7" width="5" height="1.4" fill="#c493fb"/><rect x="707" y="7" width="5" height="1.4" fill="#c493fb"/><rect x="709" y="4" width="1.4" height="7.5" fill="#c493fb"/><rect x="714" y="7" width="5" height="1.4" fill="#c493fb"/><rect x="721" y="7" width="5" height="1.4" fill="#c493fb"/><rect x="728" y="7" width="5" height="1.4" fill="#c493fb"/><rect x="735" y="7" width="5" height="1.4" fill="#c493fb"/><rect x="749" y="7" width="5" height="1.4" fill="#c493fb"/><rect x="756" y="7" width="5" height="1.4" fill="#c493fb"/><rect x="763" y="7" width="5" height="1.4" fill="#c493fb"/><rect x="770" y="7" width="5" height="1.4" fill="#c493fb"/><rect x="777" y="7" width="5" height="1.4" fill="#c493fb"/><rect x="779" y="4" width="1.4" height="7.5" fill="#c493fb"/><rect x="784" y="7" width="5" height="1.4" fill="#c493fb"/><rect x="791" y="7" width="5" height="1.4" fill="#c493fb"/><rect x="798" y="7" width="5" height="1.4" fill="#c493fb"/><rect x="805" y="7" width="5" height="1.4" fill="#c493fb"/><rect x="819" y="7" width="5" height="1.4" fill="#c493fb"/><rect x="826" y="7" width="5" height="1.4" fill="#c493fb"/><rect x="833" y="7" width="5" height="1.4" fill="#c493fb"/><rect x="840" y="7" width="5" height="1.4" fill="#c493fb"/><rect x="847" y="7" width="5" height="1.4" fill="#c493fb"/><rect x="849" y="4" width="1.4" height="7.5" fill="#c493fb"/><rect x="854" y="7" width="5" height="1.4" fill="#c493fb"/><rect x="861" y="7" width="5" height="1.4" fill="#c493fb"/><rect x="868" y="7" width="5" height="1.4" fill="#c493fb"/></svg>
<div class="a" style="left:268px;top:77px;width:869px;height:15px;overflow:hidden"><div class="tx" style="left:48px;top:0;color:#bd93f9">         1         2         3         4         5         6         7         8         9         0         1        </div></div>
<div class="a" style="left:268px;top:93px;width:869px;height:700px;overflow:hidden">
<div class="ln" style="left:0;top:2px"><span>322</span></div>
<div class="ln" style="left:0;top:17px"><span>323</span></div>
<div class="tx" style="left:48px;top:17px"><i class="cm">//</i><i class="w">·</i><i class="cm">URL</i><i class="w">·</i><i class="cm">ENCODING</i></div>
<div class="ln" style="left:0;top:32px"><span>324</span></div>
<div class="fold" style="left:36px;top:34px"></div>
<div class="tx" style="left:48px;top:32px"><i class="kw">if</i><i class="w">·</i><i class="op">(</i><i class="kw">isset</i><i class="op">(</i><i class="kw">$_REQUEST</i><i class="op">[</i><i class="st">'url'</i><i class="op">]</i><i class="op">)</i><i class="op">)</i><i class="w">·</i><i class="op">{</i></div>
<div class="ln" style="left:0;top:47px"><span>325</span></div>
<div class="tx" style="left:48px;top:47px"><i class="w">·</i><i class="w">·</i><i class="w">·</i><i class="w">·</i><i class="kw">$url</i><i class="w">·</i><i class="op">=</i><i class="w">·</i><i class="kw">strip_tags</i><i class="op">(</i><i class="kw">trim</i><i class="op">(</i><i class="kw">$_REQUEST</i><i class="op">[</i><i class="st">'url'</i><i class="op">]</i><i class="op">)</i><i class="op">)</i><i class="op">;</i></div>
<div class="ln" style="left:0;top:62px"><span>326</span></div>
<div class="tx" style="left:48px;top:62px"><i class="w">·</i><i class="w">·</i><i class="w">·</i><i class="w">·</i><i class="kw">$urlencode</i><i class="w">·</i><i class="op">=</i><i class="w">·</i><i class="kw">urlencode</i><i class="op">(</i><i class="kw">$url</i><i class="op">)</i><i class="op">;</i></div>
<div class="ln" style="left:0;top:77px"><span>327</span></div>
<div class="fold" style="left:36px;top:79px"></div>
<div class="tx" style="left:48px;top:77px"><i class="op">}</i><i class="w">·</i><i class="kw">else</i><i class="w">·</i><i class="op">{</i></div>
<div class="ln" style="left:0;top:92px"><span>328</span></div>
<div class="tx" style="left:48px;top:92px"><i class="w">·</i><i class="w">·</i><i class="w">·</i><i class="w">·</i><i class="kw">$url</i><i class="w">·</i><i class="op">=</i><i class="w">·</i><i class="st">''</i><i class="op">;</i></div>
<div class="ln" style="left:0;top:107px"><span>329</span></div>
<div class="tx" style="left:48px;top:107px"><i class="w">·</i><i class="w">·</i><i class="w">·</i><i class="w">·</i><i class="kw">$urlencode</i><i class="w">·</i><i class="op">=</i><i class="w">·</i><i class="kw">urlencode</i><i class="op">(</i><i class="kw">$_SERVER</i><i class="op">[</i><i class="st">'REQUEST_URI'</i><i class="op">]</i><i class="op">)</i><i class="op">;</i></div>
<div class="a" style="left:45px;top:121px;width:900px;height:15px;background:#a07591"></div>
<div class="a" style="left:2px;top:123px;width:7px;height:10px;background:#000"></div>
<div class="a" style="left:3px;top:124px;width:5px;height:8px;background:#00ff00"></div>
<div class="ln" style="left:0;top:122px"><span>330</span></div>
<div class="fold" style="left:36px;top:124px"></div>
<div class="tx" style="left:48px;top:122px"><i class="w">·</i><i class="w">·</i><i class="w">·</i><i class="w">·</i><i class="kw">if</i><i class="w">·</i><i class="op">(</i><i class="op">G5_DOMAIN</i><i class="op">)</i><i class="w">·</i><i class="op">{</i></div>
<div class="ln" style="left:0;top:137px"><span>331</span></div>
<div class="guide" style="left:76px;top:136px;height:15px"></div>
<div class="tx" style="left:48px;top:137px"><i class="w">·</i><i class="w">·</i><i class="w">·</i><i class="w">·</i><i class="w">·</i><i class="w">·</i><i class="w">·</i><i class="w">·</i><i class="kw">$p</i><i class="w">·</i><i class="op">=</i><i class="w">·</i><i class="op">@</i><i class="op">parse_url</i><i class="op">(</i><i class="op">G5_DOMAIN</i><i class="op">)</i><i class="op">;</i></div>
<div class="ln" style="left:0;top:152px"><span>332</span></div>
<div class="guide" style="left:76px;top:151px;height:15px"></div>
<div class="tx" style="left:48px;top:152px"><i class="w">·</i><i class="w">·</i><i class="w">·</i><i class="w">·</i><i class="w">·</i><i class="w">·</i><i class="w">·</i><i class="w">·</i><i class="kw">$urlencode</i><i class="w">·</i><i class="op">=</i><i class="w">·</i><i class="op">G5_DOMAIN</i><i class="op">.</i><i class="kw">urldecode</i><i class="op">(</i><i class="kw">preg_replace</i><i class="op">(</i><i class="st">"/^"</i><i class="op">.</i><i class="kw">urlencode</i><i class="op">(</i><i class="kw">$p</i><i class="op">[</i><i class="st">'path'</i><i class="op">]</i><i class="op">)</i><i class="op">.</i><i class="st">"/"</i><i class="op">,</i><i class="w">·</i><i class="st">""</i><i class="op">,</i><i class="w">·</i><i class="kw">$urlencode</i><i class="op">)</i><i class="op">)</i><i class="op">;</i></div>
<div class="ln" style="left:0;top:167px"><span>333</span></div>
<div class="tx" style="left:48px;top:167px"><i class="w">·</i><i class="w">·</i><i class="w">·</i><i class="w">·</i><i class="op">}</i></div>
<div class="ln" style="left:0;top:182px"><span>334</span></div>
<div class="tx" style="left:48px;top:182px"><i class="op">}</i></div>
<div class="ln" style="left:0;top:197px"><span>335</span></div>
<div class="ln" style="left:0;top:212px"><span>336</span></div>
<div class="fold" style="left:36px;top:214px"></div>
<div class="tx" style="left:48px;top:212px"><i class="kw">if</i><i class="w">·</i><i class="op">(</i><i class="kw">isset</i><i class="op">(</i><i class="kw">$_REQUEST</i><i class="op">[</i><i class="st">'gr_id'</i><i class="op">]</i><i class="op">)</i><i class="op">)</i><i class="w">·</i><i class="op">{</i></div>
<div class="ln" style="left:0;top:227px"><span>337</span></div>
<div class="fold" style="left:36px;top:229px"></div>
<div class="tx" style="left:48px;top:227px"><i class="w">·</i><i class="w">·</i><i class="w">·</i><i class="w">·</i><i class="kw">if</i><i class="w">·</i><i class="op">(</i><i class="op">!</i><i class="kw">is_array</i><i class="op">(</i><i class="kw">$_REQUEST</i><i class="op">[</i><i class="st">'gr_id'</i><i class="op">]</i><i class="op">)</i><i class="op">)</i><i class="w">·</i><i class="op">{</i></div>
<div class="ln" style="left:0;top:242px"><span>338</span></div>
<div class="guide" style="left:76px;top:241px;height:15px"></div>
<div class="tx" style="left:48px;top:242px"><i class="w">·</i><i class="w">·</i><i class="w">·</i><i class="w">·</i><i class="w">·</i><i class="w">·</i><i class="w">·</i><i class="w">·</i><i class="kw">$gr_id</i><i class="w">·</i><i class="op">=</i><i class="w">·</i><i class="kw">preg_replace</i><i class="op">(</i><i class="st">'/[^a-z0-9_]/i'</i><i class="op">,</i><i class="w">·</i><i class="st">''</i><i class="op">,</i><i class="w">·</i><i class="kw">trim</i><i class="op">(</i><i class="kw">$_REQUEST</i><i class="op">[</i><i class="st">'gr_id'</i><i class="op">]</i><i class="op">)</i><i class="op">)</i><i class="op">;</i></div>
<div class="ln" style="left:0;top:257px"><span>339</span></div>
<div class="tx" style="left:48px;top:257px"><i class="w">·</i><i class="w">·</i><i class="w">·</i><i class="w">·</i><i class="op">}</i></div>
<div class="ln" style="left:0;top:272px"><span>340</span></div>
<div class="fold" style="left:36px;top:274px"></div>
<div class="tx" style="left:48px;top:272px"><i class="op">}</i><i class="w">·</i><i class="kw">else</i><i class="w">·</i><i class="op">{</i></div>
<div class="ln" style="left:0;top:287px"><span>341</span></div>
<div class="tx" style="left:48px;top:287px"><i class="w">·</i><i class="w">·</i><i class="w">·</i><i class="w">·</i><i class="kw">$gr_id</i><i class="w">·</i><i class="op">=</i><i class="w">·</i><i class="st">''</i><i class="op">;</i></div>
<div class="ln" style="left:0;top:302px"><span>342</span></div>
<div class="tx" style="left:48px;top:302px"><i class="op">}</i></div>
<div class="ln" style="left:0;top:317px"><span>343</span></div>
<div class="tx" style="left:48px;top:317px"><i class="cm">//===================================</i></div>
<div class="a" style="left:45px;top:331px;width:900px;height:15px;background:#44475a"></div>
<div class="a" style="left:48px;top:331px;width:2px;height:15px;background:#d8dca0"></div>
<svg class="ic" style="left:2px;top:333px" width="6" height="11" viewBox="0 0 6 11"><path d="M0 0L5.5 5.5L0 11z" fill="#bd93f9"/></svg>
<div class="ln" style="left:0;top:332px"><span>344</span></div>
<div class="ln" style="left:0;top:347px"><span>345</span></div>
<div class="ln" style="left:0;top:362px"><span>346</span></div>
<div class="tx" style="left:48px;top:362px"><i class="cm">//</i><i class="w">·</i><svg class="hg" width="16" height="15" viewBox="0 -1.5 14 15" preserveAspectRatio="none"><path transform="translate(.8 0) scale(.88 1)" d="M0.5 1.0 H7.0 M3.8 1.0 L0.5 11.0 M3.8 5.0 L7.0 11.0 M9.5 0.0V12.0 M9.5 6.0H12" fill="none" stroke="#6a82c4" stroke-width=".9" vector-effect="non-scaling-stroke"/></svg><svg class="hg" width="16" height="15" viewBox="0 -1.5 14 15" preserveAspectRatio="none"><path transform="translate(.8 0) scale(.88 1)" d="M10.0 0.5 H2.0 V3.5 H10.0 M0.5 6.0H11.5 M6.0 4.0V6.0 M2.0 10.0 A4.0 1.5 0 1 0 10.0 10.0 A4.0 1.5 0 1 0 2.0 10.0" fill="none" stroke="#6a82c4" stroke-width=".9" vector-effect="non-scaling-stroke"/></svg><svg class="hg" width="16" height="15" viewBox="0 -1.5 14 15" preserveAspectRatio="none"><path transform="translate(.8 0) scale(.88 1)" d="M2.0 1.0 H10.0 V3.5 H2.0 V6.0 H10.0 M0.5 10.0H11.5 M6.0 6.5V10.0" fill="none" stroke="#6a82c4" stroke-width=".9" vector-effect="non-scaling-stroke"/></svg><svg class="hg" width="16" height="15" viewBox="0 -1.5 14 15" preserveAspectRatio="none"><path transform="translate(.8 0) scale(.88 1)" d="M2.0 1.0 H10.0 V6.0 M0.5 10.0H11.5" fill="none" stroke="#6a82c4" stroke-width=".9" vector-effect="non-scaling-stroke"/></svg><svg class="hg" width="16" height="15" viewBox="0 -1.5 14 15" preserveAspectRatio="none"><path transform="translate(.8 0) scale(.88 1)" d="M0.5 3.0 A3.2 2.5 0 1 0 7.0 3.0 A3.2 2.5 0 1 0 0.5 3.0 M10.5 0.0V7.0 M2.0 8.5 V11.5 H10.5" fill="none" stroke="#6a82c4" stroke-width=".9" vector-effect="non-scaling-stroke"/></svg><i class="w">·</i><svg class="hg" width="16" height="15" viewBox="0 -1.5 14 15" preserveAspectRatio="none"><path transform="translate(.8 0) scale(.88 1)" d="M2.0 1.0 V6.0 H10.0 V1.0 M2.0 3.2 H10.0 M0.5 7.5H11.5 M6.0 7.5V11.5" fill="none" stroke="#6a82c4" stroke-width=".9" vector-effect="non-scaling-stroke"/></svg><svg class="hg" width="16" height="15" viewBox="0 -1.5 14 15" preserveAspectRatio="none"><path transform="translate(.8 0) scale(.88 1)" d="M2.0 0.5 V3.5 H10.0 V0.5 M2.0 1.9 H10.0 M0.5 5.0H11.5 M6.0 5.0V7.0 M2.0 8.5 V11.5 H10.0" fill="none" stroke="#6a82c4" stroke-width=".9" vector-effect="non-scaling-stroke"/></svg><svg class="hg" width="16" height="15" viewBox="0 -1.5 14 15" preserveAspectRatio="none"><path transform="translate(.8 0) scale(.88 1)" d="M0.5 6.0 A3.2 5.0 0 1 0 7.0 6.0 A3.2 5.0 0 1 0 0.5 6.0 M9.5 0.0V12.0 M7.5 6.0H9.5 M11.5 0.0V12.0" fill="none" stroke="#6a82c4" stroke-width=".9" vector-effect="non-scaling-stroke"/></svg><svg class="hg" width="16" height="15" viewBox="0 -1.5 14 15" preserveAspectRatio="none"><path transform="translate(.8 0) scale(.88 1)" d="M3.8 1.0 L0.5 11.0 M3.8 4.5 L7.0 11.0 M11.5 0.0V12.0 M9 6.0H11.5" fill="none" stroke="#6a82c4" stroke-width=".9" vector-effect="non-scaling-stroke"/></svg><i class="w">·</i><svg class="hg" width="16" height="15" viewBox="0 -1.5 14 15" preserveAspectRatio="none"><path transform="translate(.8 0) scale(.88 1)" d="M3.8 0.2 V1.2 M0.5 1.5 H7.0 M3.8 1.5 L0.5 5.5 M3.8 3.0 L7.0 5.5 M11.5 0.0V7.0 M9 3.5H11.5 M6.2 8.5 L2.0 11.5 M6.2 9.6 L10.5 11.5" fill="none" stroke="#6a82c4" stroke-width=".9" vector-effect="non-scaling-stroke"/></svg><svg class="hg" width="16" height="15" viewBox="0 -1.5 14 15" preserveAspectRatio="none"><path transform="translate(.8 0) scale(.88 1)" d="M2.0 1.0 H10.0 V3.5 H2.0 V6.0 H10.0 M0.5 10.0H11.5 M6.0 6.5V10.0" fill="none" stroke="#6a82c4" stroke-width=".9" vector-effect="non-scaling-stroke"/></svg><svg class="hg" width="16" height="15" viewBox="0 -1.5 14 15" preserveAspectRatio="none"><path transform="translate(.8 0) scale(.88 1)" d="M2.0 1.0 H10.0 V6.0 M0.5 10.0H11.5" fill="none" stroke="#6a82c4" stroke-width=".9" vector-effect="non-scaling-stroke"/></svg><svg class="hg" width="16" height="15" viewBox="0 -1.5 14 15" preserveAspectRatio="none"><path transform="translate(.8 0) scale(.88 1)" d="M0.5 3.0 A3.2 2.5 0 1 0 7.0 3.0 A3.2 2.5 0 1 0 0.5 3.0 M10.5 0.0V7.0 M2.0 8.5 V11.5 H10.5" fill="none" stroke="#6a82c4" stroke-width=".9" vector-effect="non-scaling-stroke"/></svg><svg class="hg" width="16" height="15" viewBox="0 -1.5 14 15" preserveAspectRatio="none"><path transform="translate(.8 0) scale(.88 1)" d="M0.5 6.0 A3.2 5.0 0 1 0 7.0 6.0 A3.2 5.0 0 1 0 0.5 6.0 M9.5 0.0V12.0 M7.5 6.0H9.5 M11.5 0.0V12.0" fill="none" stroke="#6a82c4" stroke-width=".9" vector-effect="non-scaling-stroke"/></svg><i class="w">·</i><svg class="hg" width="16" height="15" viewBox="0 -1.5 14 15" preserveAspectRatio="none"><path transform="translate(.8 0) scale(.88 1)" d="M2.0 1.0 H10.0 M2.0 6.0 H10.0 M4.4 1.0 V6.0 M7.6 1.0 V6.0 M0.5 10.0H11.5 M6.0 6.5V10.0" fill="none" stroke="#6a82c4" stroke-width=".9" vector-effect="non-scaling-stroke"/></svg><svg class="hg" width="16" height="15" viewBox="0 -1.5 14 15" preserveAspectRatio="none"><path transform="translate(.8 0) scale(.88 1)" d="M0.5 3.0 A3.2 2.5 0 1 0 7.0 3.0 A3.2 2.5 0 1 0 0.5 3.0 M10.5 0.0V7.0 M2.0 8.5 V11.5 H10.5" fill="none" stroke="#6a82c4" stroke-width=".9" vector-effect="non-scaling-stroke"/></svg><svg class="hg" width="16" height="15" viewBox="0 -1.5 14 15" preserveAspectRatio="none"><path transform="translate(.8 0) scale(.88 1)" d="M10.0 1.0 H2.0 V6.0 H10.0 M2.0 3.5 H10.0 M0.5 10.0H11.5" fill="none" stroke="#6a82c4" stroke-width=".9" vector-effect="non-scaling-stroke"/></svg><i class="w">·</i><svg class="hg" width="16" height="15" viewBox="0 -1.5 14 15" preserveAspectRatio="none"><path transform="translate(.8 0) scale(.88 1)" d="M2.0 1.0 V6.0 H10.0 V1.0 M2.0 3.2 H10.0 M0.5 7.5H11.5 M6.0 7.5V11.5" fill="none" stroke="#6a82c4" stroke-width=".9" vector-effect="non-scaling-stroke"/></svg><svg class="hg" width="16" height="15" viewBox="0 -1.5 14 15" preserveAspectRatio="none"><path transform="translate(.8 0) scale(.88 1)" d="M0.5 6.0 A3.2 5.0 0 1 0 7.0 6.0 A3.2 5.0 0 1 0 0.5 6.0 M11.5 0.0V12.0 M9 4.2H11.5 M9 7.8H11.5" fill="none" stroke="#6a82c4" stroke-width=".9" vector-effect="non-scaling-stroke"/></svg><svg class="hg" width="16" height="15" viewBox="0 -1.5 14 15" preserveAspectRatio="none"><path transform="translate(.8 0) scale(.88 1)" d="M3.8 0.5 V2.2 M0.5 3.2 H7.0 M1.3 7.6 A2.5 3.0 0 1 0 6.2 7.6 A2.5 3.0 0 1 0 1.3 7.6 M9.5 0.0V12.0 M9.5 6.0H12" fill="none" stroke="#6a82c4" stroke-width=".9" vector-effect="non-scaling-stroke"/></svg><svg class="hg" width="16" height="15" viewBox="0 -1.5 14 15" preserveAspectRatio="none"><path transform="translate(.8 0) scale(.88 1)" d="M7.0 0.5 H0.5 V5.5 H7.0 M11.5 0.0V7.0 M9 3.5H11.5 M2.0 8.5 V11.5 H10.5" fill="none" stroke="#6a82c4" stroke-width=".9" vector-effect="non-scaling-stroke"/></svg><svg class="hg" width="16" height="15" viewBox="0 -1.5 14 15" preserveAspectRatio="none"><path transform="translate(.8 0) scale(.88 1)" d="M0.5 0.5 H7.0 V5.5 M11.5 0.0V7.0 M9 3.5H11.5 M6.2 8.5 L2.0 11.5 M6.2 9.6 L10.5 11.5" fill="none" stroke="#6a82c4" stroke-width=".9" vector-effect="non-scaling-stroke"/></svg><svg class="hg" width="16" height="15" viewBox="0 -1.5 14 15" preserveAspectRatio="none"><path transform="translate(.8 0) scale(.88 1)" d="M2.0 2.0 A4.0 1.5 0 1 0 10.0 2.0 A4.0 1.5 0 1 0 2.0 2.0 M0.5 6.0H11.5 M2.0 8.5 H10.0 V10.0 H2.0 V11.5 H10.0" fill="none" stroke="#6a82c4" stroke-width=".9" vector-effect="non-scaling-stroke"/></svg><i class="w">·</i><svg class="hg" width="16" height="15" viewBox="0 -1.5 14 15" preserveAspectRatio="none"><path transform="translate(.8 0) scale(.88 1)" d="M2.0 1.0 H10.0 V3.5 H2.0 V6.0 H10.0 M0.5 10.0H11.5 M6.0 6.5V10.0" fill="none" stroke="#6a82c4" stroke-width=".9" vector-effect="non-scaling-stroke"/></svg><svg class="hg" width="16" height="15" viewBox="0 -1.5 14 15" preserveAspectRatio="none"><path transform="translate(.8 0) scale(.88 1)" d="M2.0 1.0 H10.0 V6.0 M0.5 10.0H11.5" fill="none" stroke="#6a82c4" stroke-width=".9" vector-effect="non-scaling-stroke"/></svg><svg class="hg" width="16" height="15" viewBox="0 -1.5 14 15" preserveAspectRatio="none"><path transform="translate(.8 0) scale(.88 1)" d="M0.5 3.0 A3.2 2.5 0 1 0 7.0 3.0 A3.2 2.5 0 1 0 0.5 3.0 M10.5 0.0V7.0 M2.0 8.5 V11.5 H10.5" fill="none" stroke="#6a82c4" stroke-width=".9" vector-effect="non-scaling-stroke"/></svg><svg class="hg" width="16" height="15" viewBox="0 -1.5 14 15" preserveAspectRatio="none"><path transform="translate(.8 0) scale(.88 1)" d="M2.0 0.5 H10.0 M6.0 0.5 L2.0 3.5 M6.0 1.7 L10.0 3.5 M0.5 5.0H11.5 M6.0 5.0V7.0 M2.0 10.0 A4.0 1.5 0 1 0 10.0 10.0 A4.0 1.5 0 1 0 2.0 10.0" fill="none" stroke="#6a82c4" stroke-width=".9" vector-effect="non-scaling-stroke"/></svg><svg class="hg" width="16" height="15" viewBox="0 -1.5 14 15" preserveAspectRatio="none"><path transform="translate(.8 0) scale(.88 1)" d="M0.5 3.0 A3.2 2.5 0 1 0 7.0 3.0 A3.2 2.5 0 1 0 0.5 3.0 M10.5 0.0V7.0 M2.0 8.5 H10.5 V10.0 H2.0 V11.5 H10.5" fill="none" stroke="#6a82c4" stroke-width=".9" vector-effect="non-scaling-stroke"/></svg><svg class="hg" width="16" height="15" viewBox="0 -1.5 14 15" preserveAspectRatio="none"><path transform="translate(.8 0) scale(.88 1)" d="M3.0 1.0 H0.5 V11.0 H3.0 M7.0 1.0 H4.5 V11.0 H7.0 M8.5 0.0V12.0 M8.5 6.0H10.5 M11.5 0.0V12.0" fill="none" stroke="#6a82c4" stroke-width=".9" vector-effect="non-scaling-stroke"/></svg><svg class="hg" width="16" height="15" viewBox="0 -1.5 14 15" preserveAspectRatio="none"><path transform="translate(.8 0) scale(.88 1)" d="M2.0 1.0 H10.0 V3.5 H2.0 V6.0 H10.0 M0.5 10.0H11.5 M6.0 6.5V10.0" fill="none" stroke="#6a82c4" stroke-width=".9" vector-effect="non-scaling-stroke"/></svg><i class="w">·</i><svg class="hg" width="16" height="15" viewBox="0 -1.5 14 15" preserveAspectRatio="none"><path transform="translate(.8 0) scale(.88 1)" d="M0.5 0.5 V5.5 H7.0 V0.5 M0.5 2.8 H7.0 M11.5 0.0V7.0 M9 2.4H11.5 M9 4.5H11.5 M2.0 8.5 V11.5 H10.5" fill="none" stroke="#6a82c4" stroke-width=".9" vector-effect="non-scaling-stroke"/></svg><svg class="hg" width="16" height="15" viewBox="0 -1.5 14 15" preserveAspectRatio="none"><path transform="translate(.8 0) scale(.88 1)" d="M0.5 0.5 H7.0 V5.5 M11.5 0.0V7.0 M9 2.4H11.5 M9 4.5H11.5 M2.0 10.0 A4.2 1.5 0 1 0 10.5 10.0 A4.2 1.5 0 1 0 2.0 10.0" fill="none" stroke="#6a82c4" stroke-width=".9" vector-effect="non-scaling-stroke"/></svg><svg class="hg" width="16" height="15" viewBox="0 -1.5 14 15" preserveAspectRatio="none"><path transform="translate(.8 0) scale(.88 1)" d="M3.8 0.5 V2.2 M0.5 3.2 H7.0 M1.3 7.6 A2.5 3.0 0 1 0 6.2 7.6 A2.5 3.0 0 1 0 1.3 7.6 M9.5 0.0V12.0 M9.5 6.0H12" fill="none" stroke="#6a82c4" stroke-width=".9" vector-effect="non-scaling-stroke"/></svg><svg class="hg" width="16" height="15" viewBox="0 -1.5 14 15" preserveAspectRatio="none"><path transform="translate(.8 0) scale(.88 1)" d="M0.5 0.5 H7.0 V5.5 H0.5 Z M11.5 0.0V7.0 M9 2.4H11.5 M9 4.5H11.5 M2.0 8.5 V11.5 H10.5" fill="none" stroke="#6a82c4" stroke-width=".9" vector-effect="non-scaling-stroke"/></svg><svg class="hg" width="16" height="15" viewBox="0 -1.5 14 15" preserveAspectRatio="none"><path transform="translate(.8 0) scale(.88 1)" d="M3.8 1.0 L0.5 11.0 M3.8 4.5 L7.0 11.0 M11.5 0.0V12.0 M9 6.0H11.5" fill="none" stroke="#6a82c4" stroke-width=".9" vector-effect="non-scaling-stroke"/></svg><i class="w">·</i><svg class="hg" width="16" height="15" viewBox="0 -1.5 14 15" preserveAspectRatio="none"><path transform="translate(.8 0) scale(.88 1)" d="M2.0 1.0 H10.0 V6.0 M2.0 3.5 H10.0 M0.5 10.0H11.5 M6.0 6.5V10.0" fill="none" stroke="#6a82c4" stroke-width=".9" vector-effect="non-scaling-stroke"/></svg><svg class="hg" width="16" height="15" viewBox="0 -1.5 14 15" preserveAspectRatio="none"><path transform="translate(.8 0) scale(.88 1)" d="M10.0 1.0 H2.0 V6.0 H10.0 M0.5 10.0H11.5" fill="none" stroke="#6a82c4" stroke-width=".9" vector-effect="non-scaling-stroke"/></svg><svg class="hg" width="16" height="15" viewBox="0 -1.5 14 15" preserveAspectRatio="none"><path transform="translate(.8 0) scale(.88 1)" d="M10.0 1.0 H2.0 V6.0 H10.0 M0.5 10.0H11.5 M6.0 6.5V10.0" fill="none" stroke="#6a82c4" stroke-width=".9" vector-effect="non-scaling-stroke"/></svg><i class="w">·</i><svg class="hg" width="16" height="15" viewBox="0 -1.5 14 15" preserveAspectRatio="none"><path transform="translate(.8 0) scale(.88 1)" d="M7.0 1.0 H0.5 V11.0 H7.0 M8.5 0.0V12.0 M8.5 6.0H10.5 M11.5 0.0V12.0" fill="none" stroke="#6a82c4" stroke-width=".9" vector-effect="non-scaling-stroke"/></svg><svg class="hg" width="16" height="15" viewBox="0 -1.5 14 15" preserveAspectRatio="none"><path transform="translate(.8 0) scale(.88 1)" d="M2.0 0.5 H10.0 M2.0 3.5 H10.0 M4.4 0.5 V3.5 M7.6 0.5 V3.5 M0.5 6.0H11.5 M6.0 4.0V6.0 M2.0 8.5 H10.0 V11.5" fill="none" stroke="#6a82c4" stroke-width=".9" vector-effect="non-scaling-stroke"/></svg><i class="w">·</i><svg class="hg" width="16" height="15" viewBox="0 -1.5 14 15" preserveAspectRatio="none"><path transform="translate(.8 0) scale(.88 1)" d="M6.0 1.0 L2.0 6.0 M6.0 2.8 L10.0 6.0 M0.5 7.5H11.5 M6.0 7.5V11.5" fill="none" stroke="#6a82c4" stroke-width=".9" vector-effect="non-scaling-stroke"/></svg><svg class="hg" width="16" height="15" viewBox="0 -1.5 14 15" preserveAspectRatio="none"><path transform="translate(.8 0) scale(.88 1)" d="M0.5 0.5 H7.0 M3.8 0.5 L0.5 5.5 M3.8 2.5 L7.0 5.5 M11.5 0.0V7.0 M9 3.5H11.5 M2.0 10.0 A4.2 1.5 0 1 0 10.5 10.0 A4.2 1.5 0 1 0 2.0 10.0" fill="none" stroke="#6a82c4" stroke-width=".9" vector-effect="non-scaling-stroke"/></svg><svg class="hg" width="16" height="15" viewBox="0 -1.5 14 15" preserveAspectRatio="none"><path transform="translate(.8 0) scale(.88 1)" d="M3.8 0.5 V2.2 M0.5 3.2 H7.0 M1.3 7.6 A2.5 3.0 0 1 0 6.2 7.6 A2.5 3.0 0 1 0 1.3 7.6 M9.5 0.0V12.0 M9.5 6.0H12" fill="none" stroke="#6a82c4" stroke-width=".9" vector-effect="non-scaling-stroke"/></svg><svg class="hg" width="16" height="15" viewBox="0 -1.5 14 15" preserveAspectRatio="none"><path transform="translate(.8 0) scale(.88 1)" d="M0.5 3.0 A3.2 2.5 0 1 0 7.0 3.0 A3.2 2.5 0 1 0 0.5 3.0 M11.5 0.0V7.0 M9 2.4H11.5 M9 4.5H11.5 M3.8 8.5 L2.0 11.5 M3.8 9.6 L5.5 11.5 M8.7 8.5 L7.0 11.5 M8.7 9.6 L10.5 11.5" fill="none" stroke="#6a82c4" stroke-width=".9" vector-effect="non-scaling-stroke"/></svg><svg class="hg" width="16" height="15" viewBox="0 -1.5 14 15" preserveAspectRatio="none"><path transform="translate(.8 0) scale(.88 1)" d="M6.0 0.5 L2.0 3.5 M6.0 1.5 L10.0 3.5 M0.5 6.0H11.5 M2.0 8.5 V11.5 H10.0 V8.5 M2.0 9.8 H10.0" fill="none" stroke="#6a82c4" stroke-width=".9" vector-effect="non-scaling-stroke"/></svg><svg class="hg" width="16" height="15" viewBox="0 -1.5 14 15" preserveAspectRatio="none"><path transform="translate(.8 0) scale(.88 1)" d="M0.5 1.0 V11.0 H7.0 M10.5 0.0V12.0" fill="none" stroke="#6a82c4" stroke-width=".9" vector-effect="non-scaling-stroke"/></svg><svg class="hg" width="16" height="15" viewBox="0 -1.5 14 15" preserveAspectRatio="none"><path transform="translate(.8 0) scale(.88 1)" d="M7.0 1.0 H0.5 V11.0 H7.0 M9.5 0.0V12.0 M9.5 6.0H12" fill="none" stroke="#6a82c4" stroke-width=".9" vector-effect="non-scaling-stroke"/></svg><i class="cm">.</i></div>
<div class="ln" style="left:0;top:377px"><span>347</span></div>
<div class="foldc" style="left:36px;top:379px"><i style="left:1px;top:1px"></i><i style="left:5px;top:1px"></i><i style="left:1px;top:5px"></i><i style="left:5px;top:5px"></i></div>
<div class="tx" style="left:48px;top:377px"><i class="kw">if</i><i class="w">·</i><i class="op">(</i><i class="kw">$_SESSION</i><i class="op">[</i><i class="st">'ss_mb_id'</i><i class="op">]</i><i class="op">)</i><i class="w">·</i><i class="op">{</i><i class="w">·</i><i class="cm">//</i><i class="w">·</i><svg class="hg" width="16" height="15" viewBox="0 -1.5 14 15" preserveAspectRatio="none"><path transform="translate(.8 0) scale(.88 1)" d="M2.0 1.0 H10.0 V3.5 H2.0 V6.0 H10.0 M0.5 10.0H11.5 M6.0 6.5V10.0" fill="none" stroke="#6a82c4" stroke-width=".9" vector-effect="non-scaling-stroke"/></svg><svg class="hg" width="16" height="15" viewBox="0 -1.5 14 15" preserveAspectRatio="none"><path transform="translate(.8 0) scale(.88 1)" d="M2.0 1.0 H10.0 V6.0 M0.5 10.0H11.5" fill="none" stroke="#6a82c4" stroke-width=".9" vector-effect="non-scaling-stroke"/></svg><svg class="hg" width="16" height="15" viewBox="0 -1.5 14 15" preserveAspectRatio="none"><path transform="translate(.8 0) scale(.88 1)" d="M0.5 3.0 A3.2 2.5 0 1 0 7.0 3.0 A3.2 2.5 0 1 0 0.5 3.0 M10.5 0.0V7.0 M2.0 8.5 V11.5 H10.5" fill="none" stroke="#6a82c4" stroke-width=".9" vector-effect="non-scaling-stroke"/></svg><svg class="hg" width="16" height="15" viewBox="0 -1.5 14 15" preserveAspectRatio="none"><path transform="translate(.8 0) scale(.88 1)" d="M2.0 0.5 H10.0 M6.0 0.5 L2.0 3.5 M6.0 1.7 L10.0 3.5 M0.5 5.0H11.5 M6.0 5.0V7.0 M2.0 10.0 A4.0 1.5 0 1 0 10.0 10.0 A4.0 1.5 0 1 0 2.0 10.0" fill="none" stroke="#6a82c4" stroke-width=".9" vector-effect="non-scaling-stroke"/></svg><svg class="hg" width="16" height="15" viewBox="0 -1.5 14 15" preserveAspectRatio="none"><path transform="translate(.8 0) scale(.88 1)" d="M0.5 6.0 A3.2 5.0 0 1 0 7.0 6.0 A3.2 5.0 0 1 0 0.5 6.0 M10.5 0.0V12.0" fill="none" stroke="#6a82c4" stroke-width=".9" vector-effect="non-scaling-stroke"/></svg><svg class="hg" width="16" height="15" viewBox="0 -1.5 14 15" preserveAspectRatio="none"><path transform="translate(.8 0) scale(.88 1)" d="M0.5 1.0 H7.0 V6.0 H0.5 V11.0 H7.0 M9.5 0.0V12.0 M9.5 6.0H12" fill="none" stroke="#6a82c4" stroke-width=".9" vector-effect="non-scaling-stroke"/></svg><svg class="hg" width="16" height="15" viewBox="0 -1.5 14 15" preserveAspectRatio="none"><path transform="translate(.8 0) scale(.88 1)" d="M0.5 0.5 H7.0 V5.5 H0.5 Z M11.5 0.0V7.0 M9 2.4H11.5 M9 4.5H11.5 M2.0 8.5 V11.5 H10.5" fill="none" stroke="#6a82c4" stroke-width=".9" vector-effect="non-scaling-stroke"/></svg></div>
<div class="ln" style="left:0;top:392px"><span>366</span></div>
<div class="foldc" style="left:36px;top:394px"><i style="left:1px;top:1px"></i><i style="left:5px;top:1px"></i><i style="left:1px;top:5px"></i><i style="left:5px;top:5px"></i></div>
<div class="tx" style="left:48px;top:392px"><i class="op">}</i><i class="w">·</i><i class="kw">else</i><i class="w">·</i><i class="op">{</i></div>
<div class="ln" style="left:0;top:407px"><span>399</span></div>
<div class="tx" style="left:48px;top:407px"><i class="op">}</i></div>
<div class="ln" style="left:0;top:422px"><span>400</span></div>
<div class="ln" style="left:0;top:437px"><span>401</span></div>
<div class="ln" style="left:0;top:452px"><span>402</span></div>
<div class="tx" style="left:48px;top:452px"><i class="kw">$write</i><i class="w">·</i><i class="op">=</i><i class="w">·</i><i class="kw">array</i><i class="op">(</i><i class="op">)</i><i class="op">;</i></div>
<div class="ln" style="left:0;top:467px"><span>403</span></div>
<div class="tx" style="left:48px;top:467px"><i class="kw">$write_table</i><i class="w">·</i><i class="op">=</i><i class="w">·</i><i class="st">""</i><i class="op">;</i></div>
<div class="ln" style="left:0;top:482px"><span>404</span></div>
<div class="fold" style="left:36px;top:484px"></div>
<div class="tx" style="left:48px;top:482px"><i class="kw">if</i><i class="w">·</i><i class="op">(</i><i class="kw">$bo_table</i><i class="op">)</i><i class="w">·</i><i class="op">{</i></div>
<div class="ln" style="left:0;top:497px"><span>405</span></div>
<div class="tx" style="left:48px;top:497px"><i class="w">·</i><i class="w">·</i><i class="w">·</i><i class="w">·</i><i class="kw">$board</i><i class="w">·</i><i class="op">=</i><i class="w">·</i><i class="op">sql_fetch</i><i class="op">(</i><i class="st">"</i><i class="w">·</i><i class="st">select</i><i class="w">·</i><i class="st" style="display:inline-block;width:8px;height:15px;vertical-align:top;text-align:center;font-size:16px;line-height:23px">*</i><i class="w">·</i><i class="st">from</i><i class="w">·</i><i class="st">{$g5['board_table']}</i><i class="w">·</i><i class="st">where</i><i class="w">·</i><i class="st">bo_table</i><i class="w">·</i><i class="st">=</i><i class="w">·</i><i class="st">'$bo_table'</i><i class="w">·</i><i class="st">"</i><i class="op">)</i><i class="op">;</i></div>
<div class="ln" style="left:0;top:512px"><span>406</span></div>
<div class="fold" style="left:36px;top:514px"></div>
<div class="tx" style="left:48px;top:512px"><i class="w">·</i><i class="w">·</i><i class="w">·</i><i class="w">·</i><i class="kw">if</i><i class="w">·</i><i class="op">(</i><i class="kw">$board</i><i class="op">[</i><i class="st">'bo_table'</i><i class="op">]</i><i class="op">)</i><i class="w">·</i><i class="op">{</i></div>
<div class="ln" style="left:0;top:527px"><span>407</span></div>
<div class="guide" style="left:76px;top:526px;height:15px"></div>
<div class="tx" style="left:48px;top:527px"><i class="w">·</i><i class="w">·</i><i class="w">·</i><i class="w">·</i><i class="w">·</i><i class="w">·</i><i class="w">·</i><i class="w">·</i><i class="op">set_cookie</i><i class="op">(</i><i class="st">"ck_bo_table"</i><i class="op">,</i><i class="w">·</i><i class="kw">$board</i><i class="op">[</i><i class="st">'bo_table'</i><i class="op">]</i><i class="op">,</i><i class="w">·</i><i class="nu">86400</i><i class="w">·</i><i class="op" style="display:inline-block;width:8px;height:15px;vertical-align:top;text-align:center;font-size:16px;line-height:23px">*</i><i class="w">·</i><i class="nu">1</i><i class="op">)</i><i class="op">;</i></div>
<div class="ln" style="left:0;top:542px"><span>408</span></div>
<div class="guide" style="left:76px;top:541px;height:15px"></div>
<div class="tx" style="left:48px;top:542px"><i class="w">·</i><i class="w">·</i><i class="w">·</i><i class="w">·</i><i class="w">·</i><i class="w">·</i><i class="w">·</i><i class="w">·</i><i class="kw">$gr_id</i><i class="w">·</i><i class="op">=</i><i class="w">·</i><i class="kw">$board</i><i class="op">[</i><i class="st">'gr_id'</i><i class="op">]</i><i class="op">;</i></div>
<div class="ln" style="left:0;top:557px"><span>409</span></div>
<div class="guide" style="left:76px;top:556px;height:15px"></div>
<div class="tx" style="left:48px;top:557px"><i class="w">·</i><i class="w">·</i><i class="w">·</i><i class="w">·</i><i class="w">·</i><i class="w">·</i><i class="w">·</i><i class="w">·</i><i class="kw">$write_table</i><i class="w">·</i><i class="op">=</i><i class="w">·</i><i class="kw">$g5</i><i class="op">[</i><i class="st">'write_prefix'</i><i class="op">]</i><i class="w">·</i><i class="op">.</i><i class="w">·</i><i class="kw">$bo_table</i><i class="op">;</i><i class="w">·</i><i class="cm">//</i><i class="w">·</i><svg class="hg" width="16" height="15" viewBox="0 -1.5 14 15" preserveAspectRatio="none"><path transform="translate(.8 0) scale(.88 1)" d="M0.5 1.0 H7.0 V11.0 M9.5 0.0V12.0 M7.5 6.0H9.5 M11.5 0.0V12.0" fill="none" stroke="#6a82c4" stroke-width=".9" vector-effect="non-scaling-stroke"/></svg><svg class="hg" width="16" height="15" viewBox="0 -1.5 14 15" preserveAspectRatio="none"><path transform="translate(.8 0) scale(.88 1)" d="M3.8 1.0 L0.5 11.0 M3.8 4.5 L7.0 11.0 M10.5 0.0V12.0" fill="none" stroke="#6a82c4" stroke-width=".9" vector-effect="non-scaling-stroke"/></svg><svg class="hg" width="16" height="15" viewBox="0 -1.5 14 15" preserveAspectRatio="none"><path transform="translate(.8 0) scale(.88 1)" d="M0.5 0.5 H7.0 M0.5 5.5 H7.0 M2.5 0.5 V5.5 M5.0 0.5 V5.5 M9.5 0.0V7.0 M9.5 3.5H12 M2.0 8.5 V11.5 H10.5" fill="none" stroke="#6a82c4" stroke-width=".9" vector-effect="non-scaling-stroke"/></svg><i class="w">·</i><svg class="hg" width="16" height="15" viewBox="0 -1.5 14 15" preserveAspectRatio="none"><path transform="translate(.8 0) scale(.88 1)" d="M7.0 1.0 H0.5 V11.0 H7.0 M0.5 6.0 H7.0 M9.5 0.0V12.0 M7.5 6.0H9.5 M11.5 0.0V12.0" fill="none" stroke="#6a82c4" stroke-width=".9" vector-effect="non-scaling-stroke"/></svg><svg class="hg" width="16" height="15" viewBox="0 -1.5 14 15" preserveAspectRatio="none"><path transform="translate(.8 0) scale(.88 1)" d="M0.5 6.0 A3.2 5.0 0 1 0 7.0 6.0 A3.2 5.0 0 1 0 0.5 6.0 M10.5 0.0V12.0" fill="none" stroke="#6a82c4" stroke-width=".9" vector-effect="non-scaling-stroke"/></svg><svg class="hg" width="16" height="15" viewBox="0 -1.5 14 15" preserveAspectRatio="none"><path transform="translate(.8 0) scale(.88 1)" d="M2.0 0.5 V3.5 H10.0 V0.5 M2.0 1.9 H10.0 M0.5 6.0H11.5 M2.0 8.5 H10.0 V10.0 H2.0 V11.5 H10.0" fill="none" stroke="#6a82c4" stroke-width=".9" vector-effect="non-scaling-stroke"/></svg><i class="w">·</i><svg class="hg" width="16" height="15" viewBox="0 -1.5 14 15" preserveAspectRatio="none"><path transform="translate(.8 0) scale(.88 1)" d="M0.5 0.5 H7.0 M3.8 0.5 L0.5 5.5 M3.8 2.5 L7.0 5.5 M11.5 0.0V7.0 M9 3.5H11.5 M2.0 8.5 V11.5 H10.5" fill="none" stroke="#6a82c4" stroke-width=".9" vector-effect="non-scaling-stroke"/></svg><svg class="hg" width="16" height="15" viewBox="0 -1.5 14 15" preserveAspectRatio="none"><path transform="translate(.8 0) scale(.88 1)" d="M3.8 0.5 V2.5 M0.5 3.0 H7.0 M3.8 3.0 L0.5 11.0 M3.8 6.0 L7.0 11.0 M9.5 0.0V12.0 M7.5 6.0H9.5 M11.5 0.0V12.0" fill="none" stroke="#6a82c4" stroke-width=".9" vector-effect="non-scaling-stroke"/></svg><svg class="hg" width="16" height="15" viewBox="0 -1.5 14 15" preserveAspectRatio="none"><path transform="translate(.8 0) scale(.88 1)" d="M0.5 6.0 A3.2 5.0 0 1 0 7.0 6.0 A3.2 5.0 0 1 0 0.5 6.0 M10.5 0.0V12.0" fill="none" stroke="#6a82c4" stroke-width=".9" vector-effect="non-scaling-stroke"/></svg><svg class="hg" width="16" height="15" viewBox="0 -1.5 14 15" preserveAspectRatio="none"><path transform="translate(.8 0) scale(.88 1)" d="M2.0 0.5 H10.0 V2.0 H2.0 V3.5 H10.0 M0.5 6.0H11.5 M2.0 8.5 H10.0 V11.5 H2.0 Z" fill="none" stroke="#6a82c4" stroke-width=".9" vector-effect="non-scaling-stroke"/></svg></div>
<div class="ln" style="left:0;top:572px"><span>410</span></div>
<div class="guide" style="left:76px;top:571px;height:15px"></div>
<div class="tx" style="left:48px;top:572px"><i class="w">·</i><i class="w">·</i><i class="w">·</i><i class="w">·</i><i class="w">·</i><i class="w">·</i><i class="w">·</i><i class="w">·</i><i class="cm">//$comment_table</i><i class="w">·</i><i class="cm">=</i><i class="w">·</i><i class="cm">$g5['write_prefix']</i><i class="w">·</i><i class="cm">.</i><i class="w">·</i><i class="cm">$bo_table</i><i class="w">·</i><i class="cm">.</i><i class="w">·</i><i class="cm">$g5['comment_suffix'];</i><i class="w">·</i><i class="cm">//</i><i class="w">·</i><svg class="hg" width="16" height="15" viewBox="0 -1.5 14 15" preserveAspectRatio="none"><path transform="translate(.8 0) scale(.88 1)" d="M2.0 1.0 H10.0 V6.0 M2.0 3.5 H10.0 M0.5 10.0H11.5 M6.0 6.5V10.0" fill="none" stroke="#6a82c4" stroke-width=".9" vector-effect="non-scaling-stroke"/></svg><svg class="hg" width="16" height="15" viewBox="0 -1.5 14 15" preserveAspectRatio="none"><path transform="translate(.8 0) scale(.88 1)" d="M0.5 0.5 H7.0 V5.5 H0.5 Z M9.5 0.0V7.0 M7.5 3.5H9.5 M11.5 0.0V7.0 M2.0 8.5 V11.5 H10.5" fill="none" stroke="#6a82c4" stroke-width=".9" vector-effect="non-scaling-stroke"/></svg><svg class="hg" width="16" height="15" viewBox="0 -1.5 14 15" preserveAspectRatio="none"><path transform="translate(.8 0) scale(.88 1)" d="M10.0 1.0 H2.0 V6.0 H10.0 M2.0 3.5 H10.0 M0.5 10.0H11.5" fill="none" stroke="#6a82c4" stroke-width=".9" vector-effect="non-scaling-stroke"/></svg><i class="w">·</i><svg class="hg" width="16" height="15" viewBox="0 -1.5 14 15" preserveAspectRatio="none"><path transform="translate(.8 0) scale(.88 1)" d="M7.0 1.0 H0.5 V11.0 H7.0 M0.5 6.0 H7.0 M9.5 0.0V12.0 M7.5 6.0H9.5 M11.5 0.0V12.0" fill="none" stroke="#6a82c4" stroke-width=".9" vector-effect="non-scaling-stroke"/></svg><svg class="hg" width="16" height="15" viewBox="0 -1.5 14 15" preserveAspectRatio="none"><path transform="translate(.8 0) scale(.88 1)" d="M0.5 6.0 A3.2 5.0 0 1 0 7.0 6.0 A3.2 5.0 0 1 0 0.5 6.0 M10.5 0.0V12.0" fill="none" stroke="#6a82c4" stroke-width=".9" vector-effect="non-scaling-stroke"/></svg><svg class="hg" width="16" height="15" viewBox="0 -1.5 14 15" preserveAspectRatio="none"><path transform="translate(.8 0) scale(.88 1)" d="M2.0 0.5 V3.5 H10.0 V0.5 M2.0 1.9 H10.0 M0.5 6.0H11.5 M2.0 8.5 H10.0 V10.0 H2.0 V11.5 H10.0" fill="none" stroke="#6a82c4" stroke-width=".9" vector-effect="non-scaling-stroke"/></svg><i class="w">·</i><svg class="hg" width="16" height="15" viewBox="0 -1.5 14 15" preserveAspectRatio="none"><path transform="translate(.8 0) scale(.88 1)" d="M0.5 0.5 H7.0 M3.8 0.5 L0.5 5.5 M3.8 2.5 L7.0 5.5 M11.5 0.0V7.0 M9 3.5H11.5 M2.0 8.5 V11.5 H10.5" fill="none" stroke="#6a82c4" stroke-width=".9" vector-effect="non-scaling-stroke"/></svg><svg class="hg" width="16" height="15" viewBox="0 -1.5 14 15" preserveAspectRatio="none"><path transform="translate(.8 0) scale(.88 1)" d="M3.8 0.5 V2.5 M0.5 3.0 H7.0 M3.8 3.0 L0.5 11.0 M3.8 6.0 L7.0 11.0 M9.5 0.0V12.0 M7.5 6.0H9.5 M11.5 0.0V12.0" fill="none" stroke="#6a82c4" stroke-width=".9" vector-effect="non-scaling-stroke"/></svg><svg class="hg" width="16" height="15" viewBox="0 -1.5 14 15" preserveAspectRatio="none"><path transform="translate(.8 0) scale(.88 1)" d="M0.5 6.0 A3.2 5.0 0 1 0 7.0 6.0 A3.2 5.0 0 1 0 0.5 6.0 M10.5 0.0V12.0" fill="none" stroke="#6a82c4" stroke-width=".9" vector-effect="non-scaling-stroke"/></svg><svg class="hg" width="16" height="15" viewBox="0 -1.5 14 15" preserveAspectRatio="none"><path transform="translate(.8 0) scale(.88 1)" d="M2.0 0.5 H10.0 V2.0 H2.0 V3.5 H10.0 M0.5 6.0H11.5 M2.0 8.5 H10.0 V11.5 H2.0 Z" fill="none" stroke="#6a82c4" stroke-width=".9" vector-effect="non-scaling-stroke"/></svg></div>
<div class="ln" style="left:0;top:587px"><span>411</span></div>
<div class="fold" style="left:36px;top:589px"></div>
<div class="guide" style="left:76px;top:586px;height:15px"></div>
<div class="tx" style="left:48px;top:587px"><i class="w">·</i><i class="w">·</i><i class="w">·</i><i class="w">·</i><i class="w">·</i><i class="w">·</i><i class="w">·</i><i class="w">·</i><i class="kw">if</i><i class="w">·</i><i class="op">(</i><i class="kw">isset</i><i class="op">(</i><i class="kw">$wr_id</i><i class="op">)</i><i class="w">·</i><i class="op">&amp;</i><i class="op">&amp;</i><i class="w">·</i><i class="kw">$wr_id</i><i class="op">)</i></div>
<div class="ln" style="left:0;top:602px"><span>412</span></div>
<div class="guide" style="left:76px;top:601px;height:15px"></div>
<div class="guide" style="left:104px;top:601px;height:15px"></div>
<div class="tx" style="left:48px;top:602px"><i class="w">·</i><i class="w">·</i><i class="w">·</i><i class="w">·</i><i class="w">·</i><i class="w">·</i><i class="w">·</i><i class="w">·</i><i class="w">·</i><i class="w">·</i><i class="w">·</i><i class="w">·</i><i class="kw">$write</i><i class="w">·</i><i class="op">=</i><i class="w">·</i><i class="op">sql_fetch</i><i class="op">(</i><i class="st">"</i><i class="w">·</i><i class="st">select</i><i class="w">·</i><i class="st" style="display:inline-block;width:8px;height:15px;vertical-align:top;text-align:center;font-size:16px;line-height:23px">*</i><i class="w">·</i><i class="st">from</i><i class="w">·</i><i class="st">$write_table</i><i class="w">·</i><i class="st">where</i><i class="w">·</i><i class="st">wr_id</i><i class="w">·</i><i class="st">=</i><i class="w">·</i><i class="st">'$wr_id'</i><i class="w">·</i><i class="st">"</i><i class="op">)</i><i class="op">;</i></div>
<div class="ln" style="left:0;top:617px"><span>413</span></div>
<div class="tx" style="left:48px;top:617px"><i class="w">·</i><i class="w">·</i><i class="w">·</i><i class="w">·</i><i class="op">}</i></div>
<div class="ln" style="left:0;top:632px"><span>414</span></div>
<div class="tx" style="left:48px;top:632px"><i class="op">}</i></div>
<div class="ln" style="left:0;top:647px"><span>415</span></div>
<div class="ln" style="left:0;top:662px"><span>416</span></div>
<div class="fold" style="left:36px;top:664px"></div>
<div class="tx" style="left:48px;top:662px"><i class="kw">if</i><i class="w">·</i><i class="op">(</i><i class="kw">$gr_id</i><i class="op">)</i><i class="w">·</i><i class="op">{</i></div>
<div class="ln" style="left:0;top:677px"><span>417</span></div>
<div class="tx" style="left:48px;top:677px"><i class="w">·</i><i class="w">·</i><i class="w">·</i><i class="w">·</i><i class="kw">$group</i><i class="w">·</i><i class="op">=</i><i class="w">·</i><i class="op">sql_fetch</i><i class="op">(</i><i class="st">"</i><i class="w">·</i><i class="st">select</i><i class="w">·</i><i class="st" style="display:inline-block;width:8px;height:15px;vertical-align:top;text-align:center;font-size:16px;line-height:23px">*</i><i class="w">·</i><i class="st">from</i><i class="w">·</i><i class="st">{$g5['group_table']}</i><i class="w">·</i><i class="st">where</i><i class="w">·</i><i class="st">gr_id</i><i class="w">·</i><i class="st">=</i><i class="w">·</i><i class="st">'$gr_id'</i><i class="w">·</i><i class="st">"</i><i class="op">)</i><i class="op">;</i></div>
<div class="ln" style="left:0;top:692px"><span>418</span></div>
<div class="tx" style="left:48px;top:692px"><i class="op">}</i></div>
</div>
<div class="sb" style="left:1137px;top:77px;width:19px;height:716px;border-left:1px solid #fff"></div>
<div class="a" style="left:1137px;top:77px;width:18px;height:8px;background:#fafafa;border-right:1px solid #9a9a9a;border-bottom:1px solid #9a9a9a"></div>
<div class="a" style="left:1138px;top:456px;width:16px;height:49px;background:#cdcdcd"></div>
<svg class="ic" style="left:1142px;top:90px" width="9" height="6" viewBox="0 0 9 6"><path d="M1 5L4.5 1.5L8 5" fill="none" stroke="#505050" stroke-width="2.1"/></svg>
<svg class="ic" style="left:1142px;top:782px" width="9" height="6" viewBox="0 0 9 6"><path d="M1 1L4.5 4.5L8 1" fill="none" stroke="#505050" stroke-width="2.1"/></svg>
<div class="a" style="left:1px;top:793px;width:1155px;height:24px;background:#fff"></div>
<svg class="ic" style="left:5px;top:797px" width="15" height="16" viewBox="0 0 15 16"><rect x=".3" y=".3" width="11.7" height="14.7" fill="url(#fg)" stroke="#e6c868" stroke-width=".6"/><rect x="12" y="5.5" width="2.6" height="9.5" fill="#efcf6a"/><rect x="12.7" y="7" width="1.2" height="2.5" fill="#e8f4ff"/><rect x="12.7" y="9.5" width="1.2" height="3" fill="#2f8fe0"/></svg>
<div class="a" style="left:25px;top:795px;width:1px;height:20px;background:#e0e0e0"></div>
<div class="a" style="left:166px;top:795px;width:140px;height:21px;background:#cce8ff;border:1px solid #99d1ff"></div>
<svg class="ic" style="left:58px;top:802px" width="9" height="9" viewBox="0 0 9 9"><path d="M4.5 .8L8.2 4.5L4.5 8.2L.8 4.5z" fill="#8ec8f0" stroke="#1a2a50" stroke-width="1.1"/><path d="M4.5 2.5L6.5 4.5L4.5 6.5" fill="#2a70c0"/></svg>
<svg class="ic" style="left:195px;top:802px" width="9" height="9" viewBox="0 0 9 9"><path d="M4.5 .8L8.2 4.5L4.5 8.2L.8 4.5z" fill="#8ec8f0" stroke="#1a2a50" stroke-width="1.1"/><path d="M4.5 2.5L6.5 4.5L4.5 6.5" fill="#2a70c0"/></svg>
<div class="a mono" style="left:70px;top:798px;font-size:13.333px;line-height:16px;color:#000;white-space:pre;transform:scaleX(.875);transform-origin:0 0">common.js</div>
<div class="a mono" style="left:207px;top:798px;font-size:13.333px;line-height:16px;color:#1a1aff;white-space:pre;transform:scaleX(.875);transform-origin:0 0">common.php</div>
<div class="a" style="left:1px;top:817px;width:1155px;height:1px;background:#d7d7d7"></div>
<div class="a" style="left:1px;top:818px;width:1155px;height:19px;background:#f0f0f0"></div>
<div class="stat" style="left:3px">For Help, press F1</div>
<div class="stat" style="left:593px">ln 344</div>
<div class="stat" style="left:664px">col 1</div>
<div class="stat" style="left:741px">646</div>
<div class="stat" style="left:798px">00</div>
<div class="stat" style="left:854px">UNIX</div>
<div class="stat" style="left:907px">UTF-8</div>
<div class="stat" style="left:1060px;width:75px;text-align:right">24,948</div>
<div class="ssep" style="left:659px"></div>
<div class="ssep" style="left:736px"></div>
<div class="ssep" style="left:793px"></div>
<div class="ssep" style="left:849px"></div>
<div class="ssep" style="left:902px"></div>
<div class="ssep" style="left:958px"></div>
<div class="ssep" style="left:990px"></div>
<div class="ssep" style="left:1021px"></div>
<div class="ssep" style="left:1059px"></div>
<div class="ssep" style="left:1136px"></div>
<div class="a" style="left:1152px;top:828px;width:2px;height:2px;background:#b8b8b8"></div>
<div class="a" style="left:1149px;top:831px;width:2px;height:2px;background:#b8b8b8"></div>
<div class="a" style="left:1152px;top:831px;width:2px;height:2px;background:#b8b8b8"></div>
<div class="a" style="left:1146px;top:834px;width:2px;height:2px;background:#b8b8b8"></div>
<div class="a" style="left:1149px;top:834px;width:2px;height:2px;background:#b8b8b8"></div>
<div class="a" style="left:1152px;top:834px;width:2px;height:2px;background:#b8b8b8"></div>
<div class="a" style="left:0;top:0;width:1px;height:838px;background:#1883d7"></div>
<div class="a" style="left:1156px;top:0;width:1px;height:838px;background:#1883d7"></div>
<div class="a" style="left:0;top:837px;width:1157px;height:1px;background:#1883d7"></div>
</body></html>
